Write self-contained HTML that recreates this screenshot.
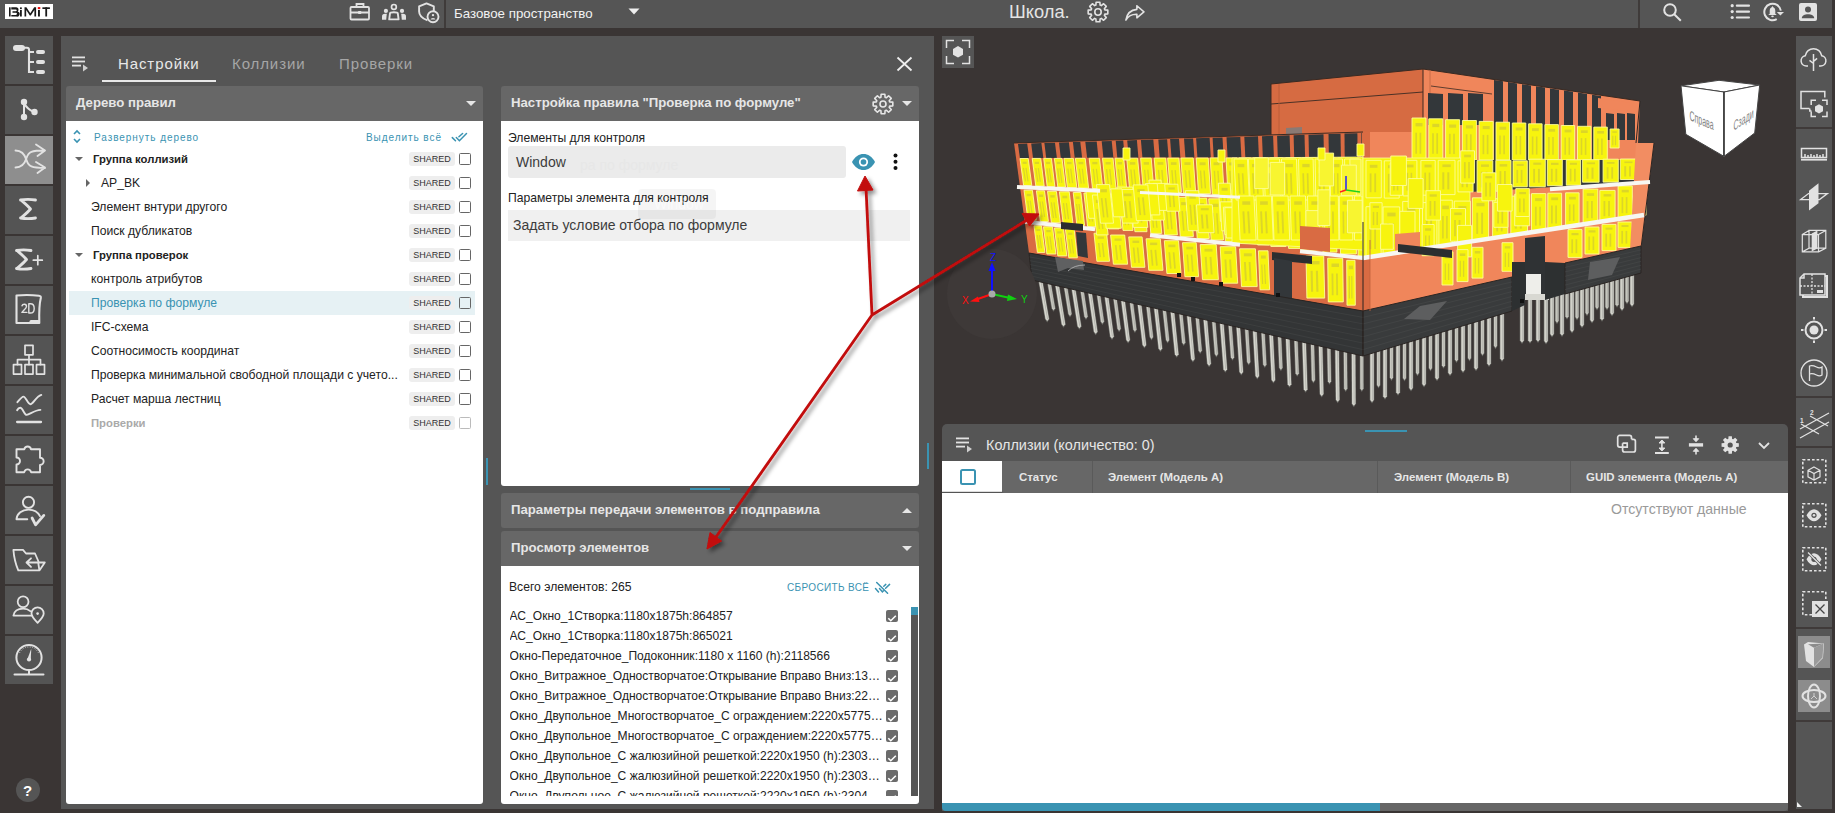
<!DOCTYPE html>
<html><head><meta charset="utf-8">
<style>
*{margin:0;padding:0;box-sizing:border-box}
html,body{width:1835px;height:813px;overflow:hidden;background:#3a3534;font-family:"Liberation Sans",sans-serif}
.a{position:absolute}
.t{position:absolute;white-space:nowrap;line-height:1}
.sb{position:absolute;left:5px;width:48px;height:48px;background:#545454}
.sb.act{background:#8e8e8e}
.sb svg,.ic svg{position:absolute;left:0;top:0;overflow:visible}
.hdr{position:absolute;background:#676767;border-radius:3px 3px 0 0}
.ttl{position:absolute;font-size:13.2px;font-weight:bold;color:#e6e6e6;white-space:nowrap;line-height:1}
.wh{position:absolute;background:#fff}
.tx{position:absolute;font-size:12.15px;color:#222;white-space:nowrap;line-height:1}
.badge{position:absolute;width:46px;height:14px;background:#eeeeee;border-radius:3px;font-size:9px;color:#333;text-align:center;line-height:14px}
.cb{position:absolute;width:12px;height:12px;border:1.5px solid #666;border-radius:1.5px}
.li{position:absolute;left:509px;font-size:12.05px;color:#222;white-space:nowrap;line-height:14px;overflow:hidden;text-overflow:ellipsis}
.lcb{position:absolute;left:886px;width:12px;height:12px;background:#6b6b6b;border-radius:2px}
.rs{position:absolute;left:1796px;width:36px;background:#555555}
</style></head><body>

<div class="a" style="left:0;top:0;width:1832px;height:28px;background:#555555"></div>
<div class="a" style="left:5px;top:4px;width:48px;height:15px;background:#fff"></div>
<svg class="a" style="left:5px;top:4px" width="48" height="15" viewBox="0 0 48 15">
<g fill="#1a1a1a">
<rect x="4" y="3.3" width="1.6" height="9.2"/>
<path d="M6.3 3.3h4.9a2.3 2.3 0 0 1 1.5 4.1a2.5 2.5 0 0 1 -1.4 5.1h-5v-1.6h4.6a1.05 1.05 0 0 0 0 -2.1h-3.4v-1.5h3.3a0.95 0.95 0 0 0 0 -1.9h-4.5z"/>
<rect x="15" y="5.9" width="1.8" height="6.6"/>
<rect x="15" y="3.4" width="1.8" height="1.6"/>
<path d="M19.5 12.5v-9.2h1.9l3.9 6l3.9 -6h1.9v9.2h-1.7v-6.4l-3.6 5.4h-1l-3.6 -5.4v6.4z"/>
<rect x="33" y="5.9" width="1.9" height="6.6"/>
<rect x="37.4" y="3.3" width="7.5" height="1.7"/>
<rect x="40.3" y="3.3" width="1.8" height="9.2"/>
</g>
<rect x="32.8" y="3.1" width="2.5" height="1.9" fill="#e00"/>
</svg>
<svg class="a" style="left:349px;top:2px" width="22" height="19" viewBox="0 0 22 19" fill="none" stroke="#e2e2e2" stroke-width="1.8">
<rect x="1.5" y="5" width="18.5" height="12.5" rx="1"/><path d="M7.5 5V2h7v3M1.5 10.5h18.5"/><rect x="9.2" y="9" width="3" height="3" fill="#e2e2e2" stroke="none"/></svg>
<svg class="a" style="left:381px;top:3px" width="26" height="18" viewBox="0 0 26 18" fill="#e2e2e2">
<circle cx="12.9" cy="3.9" r="2.4" fill="none" stroke="#e2e2e2" stroke-width="1.7"/>
<path d="M8.2 16.4L9 10.4Q9.2 9.2 12.9 9.2Q16.6 9.2 16.8 10.4L17.6 16.4z" fill="none" stroke="#e2e2e2" stroke-width="1.9" stroke-linejoin="round"/>
<circle cx="4.9" cy="7.9" r="2.1"/><path d="M1 16.8V13.5Q1 11 4 10.8H5.8L5.2 16.8z"/>
<circle cx="21" cy="7.9" r="2.1"/><path d="M25 16.8V13.5Q25 11 22 10.8H20.2L20.8 16.8z"/>
</svg>
<svg class="a" style="left:418px;top:2px" width="23" height="22" viewBox="0 0 23 22" fill="none" stroke="#e2e2e2" stroke-width="1.9">
<path d="M9.5 18.4C4.5 16.5 1.1 13.5 1.1 9.5V4.4L8.5 1.4L15.8 4.4V9.6" stroke-linejoin="round"/>
<circle cx="15" cy="14.8" r="5.5"/><circle cx="15" cy="13.1" r="1.2" fill="#e2e2e2" stroke="none"/><path d="M12.6 17.6a2.4 1.7 0 0 1 4.8 0z" fill="#e2e2e2" stroke="none"/>
</svg>
<div class="a" style="left:444px;top:0;width:2px;height:28px;background:#3f3b3a"></div>
<div class="t" style="left:454px;top:7px;font-size:13.3px;color:#f2f2f2">Базовое пространство</div>
<svg class="a" style="left:628px;top:8px" width="12" height="7"><path d="M0.5 0.5h11L6 6.5z" fill="#eee"/></svg>
<div class="t" style="left:1009px;top:3px;font-size:18.3px;color:#e4e4e4">Школа.</div>
<svg class="a" style="left:1086px;top:0" width="24" height="24"><path d="M18.88 9.86 L21.82 10.13 L21.82 13.87 L18.88 14.14 L18.37 15.35 L20.27 17.62 L17.62 20.27 L15.35 18.37 L14.14 18.88 L13.87 21.82 L10.13 21.82 L9.86 18.88 L8.65 18.37 L6.38 20.27 L3.73 17.62 L5.63 15.35 L5.12 14.14 L2.18 13.87 L2.18 10.13 L5.12 9.86 L5.63 8.65 L3.73 6.38 L6.38 3.73 L8.65 5.63 L9.86 5.12 L10.13 2.18 L13.87 2.18 L14.14 5.12 L15.35 5.63 L17.62 3.73 L20.27 6.38 L18.37 8.65Z" fill="none" stroke="#e2e2e2" stroke-width="1.6" stroke-linejoin="round"/><circle cx="12" cy="12" r="3.2" fill="none" stroke="#e2e2e2" stroke-width="1.6"/></svg>
<svg class="a" style="left:1125px;top:5px" width="20" height="16" viewBox="0 0 21 17"><path d="M12.5 0.8L20 7.2L12.5 13.6V9.8C7 9.6 3.5 11.5 0.8 16C1.8 9.5 5.5 5.2 12.5 4.6Z" fill="none" stroke="#e2e2e2" stroke-width="1.7" stroke-linejoin="round"/></svg>
<div class="a" style="left:1638px;top:0;width:2px;height:28px;background:#3f3b3a"></div>
<svg class="a" style="left:1662px;top:2px" width="20" height="20" fill="none" stroke="#e2e2e2" stroke-width="2"><circle cx="8" cy="8" r="5.8"/><path d="M12.2 12.2L18.8 18.8"/></svg>
<svg class="a" style="left:1730px;top:3px" width="21" height="17" fill="#e2e2e2"><circle cx="2.2" cy="2.7" r="1.6"/><circle cx="2.2" cy="8.6" r="1.6"/><circle cx="2.2" cy="14.5" r="1.6"/><rect x="5.8" y="1.6" width="14.2" height="2.2" rx="1"/><rect x="5.8" y="7.5" width="14.2" height="2.2" rx="1"/><rect x="5.8" y="13.4" width="14.2" height="2.2" rx="1"/></svg>
<svg class="a" style="left:1763px;top:2px" width="24" height="21" viewBox="0 0 24 21"><path d="M13.75 17.2A8.3 8.3 0 1 1 17.8 8.6" fill="none" stroke="#e2e2e2" stroke-width="2"/><path d="M13.8 10h7.2l-3.6 3.6z" fill="#e2e2e2"/><path d="M9.5 4L10.3 5.2C12 5.8 12.3 7.5 12.3 9.2V11.8L13.8 13.1H5.2L6.7 11.8V9.2C6.7 7.5 7 5.8 8.7 5.2z" fill="#e2e2e2"/><ellipse cx="9.5" cy="14.4" rx="1.3" ry="0.8" fill="#e2e2e2"/></svg>
<svg class="a" style="left:1799px;top:3px" width="18" height="18" viewBox="0 0 18 18"><rect x="0" y="0" width="18" height="18" rx="2" fill="#e2e2e2"/><circle cx="9" cy="6.4" r="3" fill="#555"/><path d="M2.8 15.2c0-2.6 3-4 6.2-4s6.2 1.4 6.2 4z" fill="#555"/></svg>
<div class="a" style="left:1832px;top:0;width:3px;height:813px;background:#3a3534"></div>
<div class="sb" style="top:36px"><svg width="48" height="48" viewBox="0 0 48 48"><rect x="8" y="8.9" width="12" height="6" rx="3" fill="#e2e2e2"/><path d="M19 11.8h3a2 2 0 0 1 2 2V36h5M24 16h5M24 26h5" fill="none" stroke="#e2e2e2" stroke-width="2.1"/><rect x="31" y="14" width="9" height="4" rx="2" fill="#e2e2e2"/><rect x="31" y="24" width="9" height="4" rx="2" fill="#e2e2e2"/><rect x="31" y="34" width="9" height="4" rx="2" fill="#e2e2e2"/></svg></div>
<div class="sb" style="top:86px"><svg width="48" height="48" viewBox="0 0 48 48"><path d="M19 16v15M19 17c2 4 5 7 10 9" fill="none" stroke="#e2e2e2" stroke-linecap="round" stroke-linejoin="round" stroke-width="2"/><circle cx="19" cy="16" r="3.2" fill="#e2e2e2"/><circle cx="19" cy="31" r="3.2" fill="#e2e2e2"/><circle cx="29.5" cy="26" r="3.2" fill="#e2e2e2"/></svg></div>
<div class="sb act" style="top:136px"><svg width="48" height="48" viewBox="0 0 48 48"><path d="M10.5 14.5c6 0 9 3 11 9.5s5 8 18.5 8M10.5 31.5c6 0 9-3 11-9.5s5-7.5 18.5-7.5M31 8.5l9 6l-7.5 5.5M31 26l9 5.5l-7.5 5.5" fill="none" stroke="#e2e2e2" stroke-linecap="round" stroke-linejoin="round" stroke-width="1.9"/></svg></div>
<div class="sb" style="top:186px"><svg width="48" height="48" viewBox="0 0 48 48"><path d="M15.5 14c5-0.8 10-0.8 15 0M16.5 14.5c3.5 3 6.5 5.5 9 8.5c-2.5 3-5.5 5.5-9 8.5M15.5 32c5 0.8 10 0.8 15 0" fill="none" stroke="#e2e2e2" stroke-linecap="round" stroke-linejoin="round" stroke-width="2.8"/></svg></div>
<div class="sb" style="top:236px"><svg width="48" height="48" viewBox="0 0 48 48"><path d="M11.5 14.5c4.5-0.8 9.5-0.8 14.5 0M12.5 15c3.5 3 6.5 5.5 9 8.5c-2.5 3-5.5 5.5-9 8.5M11.5 32.5c4.5 0.8 9.5 0.8 14.5 0" fill="none" stroke="#e2e2e2" stroke-linecap="round" stroke-linejoin="round" stroke-width="2.8"/><path d="M28.3 24.2h9M32.8 19.7v9" fill="none" stroke="#e2e2e2" stroke-linecap="round" stroke-linejoin="round" stroke-width="1.7"/></svg></div>
<div class="sb" style="top:286px"><svg width="48" height="48" viewBox="0 0 48 48"><path d="M11.5 9.5c7-0.7 15-0.7 22.5 0.2c1.5 0.2 2 1 1.8 2.2c-1.3 5-1.8 14-1.5 25.1h-22.8z" fill="none" stroke="#e2e2e2" stroke-linecap="round" stroke-linejoin="round" stroke-width="2.1"/><path d="M26 35.5h7.5" fill="none" stroke="#e2e2e2" stroke-linecap="round" stroke-linejoin="round" stroke-width="3"/><path d="M17 19.8c0.6-2 4.5-2.2 4.5 0.6c0 1.8-2.8 3.6-4.6 6h5M23.8 17.8v9.2h1.6c2.6 0 3.8-2 3.8-4.6s-1.2-4.6-3.8-4.6z" fill="none" stroke="#e2e2e2" stroke-linecap="round" stroke-linejoin="round" stroke-width="1.4"/></svg></div>
<div class="sb" style="top:336px"><svg width="48" height="48" viewBox="0 0 48 48"><rect x="20" y="9.3" width="8" height="9.5" fill="none" stroke="#e2e2e2" stroke-linecap="round" stroke-linejoin="round" stroke-width="1.7"/><rect x="8.5" y="28.6" width="8" height="9.5" fill="none" stroke="#e2e2e2" stroke-linecap="round" stroke-linejoin="round" stroke-width="1.7"/><rect x="20" y="28.6" width="8" height="9.5" fill="none" stroke="#e2e2e2" stroke-linecap="round" stroke-linejoin="round" stroke-width="1.7"/><rect x="31.5" y="28.6" width="8" height="9.5" fill="none" stroke="#e2e2e2" stroke-linecap="round" stroke-linejoin="round" stroke-width="1.7"/><path d="M24 18.8v9.8M12.5 28.6v-5h23v5" fill="none" stroke="#e2e2e2" stroke-linecap="round" stroke-linejoin="round" stroke-width="1.7"/></svg></div>
<div class="sb" style="top:386px"><svg width="48" height="48" viewBox="0 0 48 48"><path d="M12.4 16.2C15 13 17 10.6 18.6 10.6C20.5 10.6 23 18.3 25.4 18.3C28 18.3 31 10.5 36.3 8.9M12.1 24.2C13 22.5 14.5 21.8 15.3 21.8C17.5 21.8 19.5 28.9 21.5 28.9C25 28 30 24.2 35.4 23.9" fill="none" stroke="#e2e2e2" stroke-linecap="round" stroke-linejoin="round" stroke-width="1.9"/><path d="M12.1 36H36" fill="none" stroke="#e2e2e2" stroke-linecap="round" stroke-linejoin="round" stroke-width="2.3" stroke-linecap="butt"/></svg></div>
<div class="sb" style="top:436px"><svg width="48" height="48" viewBox="0 0 48 48"><path d="M11.5 13.3H19.3a3.4 3.4 0 0 1 6.7 0H35V21.7a3.6 3.6 0 0 1 0 7.3V36.2H26a3.4 3.4 0 0 0 -6.7 0H11.5V28.5a3.5 3.5 0 0 0 0 -7z" fill="none" stroke="#e2e2e2" stroke-linecap="round" stroke-linejoin="round" stroke-width="1.9"/></svg></div>
<div class="sb" style="top:486px"><svg width="48" height="48" viewBox="0 0 48 48"><circle cx="23.5" cy="16.3" r="5.6" fill="none" stroke="#e2e2e2" stroke-linecap="round" stroke-linejoin="round" stroke-width="1.9"/><path d="M22.3 33.2H11.5c0.5-5.5 5.5-9.6 12-9.6c5 0 9.5 2.5 11.5 6.6" fill="none" stroke="#e2e2e2" stroke-linecap="round" stroke-linejoin="round" stroke-width="1.9"/><path d="M27.1 32l3.5 6.8l8.2-9.4" fill="none" stroke="#e2e2e2" stroke-linecap="round" stroke-linejoin="round" stroke-width="2.8"/></svg></div>
<div class="sb" style="top:536px"><svg width="48" height="48" viewBox="0 0 48 48"><path d="M13.3 34.4C10.5 28 8.8 19 8.4 13.9H18L21 17.5H30L33.5 25.5M21.5 26.5H39.8L34.4 34.4H13.3M33.2 26.5L34.4 34.4M26 22.3L21.5 26.5L26 30.8" fill="none" stroke="#e2e2e2" stroke-linecap="round" stroke-linejoin="round" stroke-width="1.8"/></svg></div>
<div class="sb" style="top:586px"><svg width="48" height="48" viewBox="0 0 48 48"><circle cx="18.1" cy="15.8" r="5.4" fill="none" stroke="#e2e2e2" stroke-linecap="round" stroke-linejoin="round" stroke-width="1.8"/><path d="M27 29.6H8.4c0.8-4.5 4.8-7 9.7-7c3 0 5.5 1 7.2 2.6" fill="none" stroke="#e2e2e2" stroke-linecap="round" stroke-linejoin="round" stroke-width="1.8"/><path d="M32.6 36.8c-3.5-3.5-6.1-6.5-6.1-9.3a6.1 6.1 0 0 1 12.2 0c0 2.8-2.6 5.8-6.1 9.3z" fill="none" stroke="#e2e2e2" stroke-linecap="round" stroke-linejoin="round" stroke-width="1.8"/><circle cx="32.6" cy="27.6" r="1.3" fill="#e2e2e2"/></svg></div>
<div class="sb" style="top:636px"><svg width="48" height="48" viewBox="0 0 48 48"><circle cx="24" cy="21.5" r="12.6" fill="none" stroke="#e2e2e2" stroke-linecap="round" stroke-linejoin="round" stroke-width="2"/><path d="M14.5 17a10.5 10.5 0 0 1 19 0" fill="none" stroke="#e2e2e2" stroke-width="0.8" stroke-dasharray="1 1.5"/><path d="M22.3 23.5l4-11l-0.6 11.6z" fill="#e2e2e2"/><circle cx="24" cy="23.5" r="2.1" fill="#e2e2e2"/><path d="M24 34.2v3.5M9.5 38.6h29" fill="none" stroke="#e2e2e2" stroke-linecap="round" stroke-linejoin="round" stroke-width="2"/></svg></div>
<div class="a" style="left:16px;top:778px;width:24px;height:24px;border-radius:50%;background:#555"></div>
<div class="t" style="left:23px;top:783px;font-size:15px;font-weight:bold;color:#fff">?</div>
<div class="a" style="left:61px;top:36px;width:873px;height:773px;background:#555555"></div>
<svg class="a" style="left:72px;top:56px" width="18" height="16" viewBox="0 0 18 16"><rect x="0" y="0.5" width="13" height="1.8" fill="#e2e2e2"/><rect x="0" y="4.6" width="13" height="1.8" fill="#e2e2e2"/><rect x="0" y="8.7" width="9" height="1.8" fill="#e2e2e2"/><path d="M11 8.5l5 3.5l-5 3.5z" fill="#cfcfcf"/></svg>
<div class="t" style="left:118px;top:56px;font-size:15px;color:#e8e8e8;letter-spacing:0.9px">Настройки</div>
<div class="t" style="left:232px;top:56px;font-size:15px;color:#a6a6a6;letter-spacing:0.9px">Коллизии</div>
<div class="t" style="left:339px;top:56px;font-size:15px;color:#a6a6a6;letter-spacing:0.9px">Проверки</div>
<div class="a" style="left:102px;top:80px;width:114px;height:2px;background:#e8e8e8"></div>
<svg class="a" style="left:896px;top:56px" width="17" height="16"><path d="M1.5 1.5L15.5 14.5M15.5 1.5L1.5 14.5" stroke="#eee" stroke-width="1.8"/></svg>
<div class="hdr" style="left:66px;top:86px;width:417px;height:35px"></div>
<div class="ttl" style="left:76px;top:96px">Дерево правил</div>
<svg class="a" style="left:466px;top:101px" width="10" height="5"><path d="M0 0H10L5.0 5z" fill="#e6e6e6"/></svg>
<div class="wh" style="left:66px;top:121px;width:417px;height:683px;border-radius:0 0 3px 3px"></div>
<svg class="a" style="left:72px;top:129px" width="10" height="15" fill="none" stroke="#3a93b2" stroke-width="1.6"><path d="M2 5l3-3l3 3M2 10l3 3l3-3"/></svg>
<div class="t" style="left:94px;top:133px;font-size:10px;color:#3a93b2;letter-spacing:0.94px">Развернуть дерево</div>
<div class="t" style="left:366px;top:133px;font-size:10px;color:#3a93b2;letter-spacing:0.94px">Выделить всё</div>
<svg class="a" style="left:440px;top:125px" width="40" height="25" viewBox="440 125 40 25" fill="none" stroke="#3a93b2" stroke-width="1.5" stroke-linecap="round"><path d="M452.3 137.6L455.5 140.8M456.3 137.5L459.4 140.7L466.5 133.5M458.9 136.8L462.6 133.5"/></svg>
<div class="tx" style="left:93px;top:153.5px;color:#222;font-weight:bold;font-size:11.3px;">Группа коллизий</div>
<svg class="a" style="left:75px;top:157px" width="8" height="5"><path d="M0 0h8l-4 4z" fill="#666"/></svg>
<div class="badge" style="left:409px;top:152px">SHARED</div>
<div class="cb" style="left:459px;top:153px;border-color:#666"></div>
<div class="tx" style="left:101px;top:177px;color:#222;font-weight:normal;">AP_BK</div>
<svg class="a" style="left:86px;top:179px" width="5" height="8"><path d="M0 0v8l4-4z" fill="#666"/></svg>
<div class="badge" style="left:409px;top:176px">SHARED</div>
<div class="cb" style="left:459px;top:177px;border-color:#666"></div>
<div class="tx" style="left:91px;top:201px;color:#222;font-weight:normal;">Элемент внтури другого</div>
<div class="badge" style="left:409px;top:200px">SHARED</div>
<div class="cb" style="left:459px;top:201px;border-color:#666"></div>
<div class="tx" style="left:91px;top:225px;color:#222;font-weight:normal;">Поиск дубликатов</div>
<div class="badge" style="left:409px;top:224px">SHARED</div>
<div class="cb" style="left:459px;top:225px;border-color:#666"></div>
<div class="tx" style="left:93px;top:249.5px;color:#222;font-weight:bold;font-size:11.3px;">Группа проверок</div>
<svg class="a" style="left:75px;top:253px" width="8" height="5"><path d="M0 0h8l-4 4z" fill="#666"/></svg>
<div class="badge" style="left:409px;top:248px">SHARED</div>
<div class="cb" style="left:459px;top:249px;border-color:#666"></div>
<div class="tx" style="left:91px;top:273px;color:#222;font-weight:normal;">контроль атрибутов</div>
<div class="badge" style="left:409px;top:272px">SHARED</div>
<div class="cb" style="left:459px;top:273px;border-color:#666"></div>
<div class="a" style="left:69px;top:291px;width:406px;height:24px;background:#e6f1f4"></div>
<div class="tx" style="left:91px;top:297px;color:#3a93b2;font-weight:normal;">Проверка по формуле</div>
<div class="badge" style="left:409px;top:296px">SHARED</div>
<div class="cb" style="left:459px;top:297px;border-color:#666"></div>
<div class="tx" style="left:91px;top:321px;color:#222;font-weight:normal;">IFC-схема</div>
<div class="badge" style="left:409px;top:320px">SHARED</div>
<div class="cb" style="left:459px;top:321px;border-color:#666"></div>
<div class="tx" style="left:91px;top:345px;color:#222;font-weight:normal;">Соотносимость координат</div>
<div class="badge" style="left:409px;top:344px">SHARED</div>
<div class="cb" style="left:459px;top:345px;border-color:#666"></div>
<div class="tx" style="left:91px;top:369px;color:#222;font-weight:normal;">Проверка минимальной свободной площади с учето...</div>
<div class="badge" style="left:409px;top:368px">SHARED</div>
<div class="cb" style="left:459px;top:369px;border-color:#666"></div>
<div class="tx" style="left:91px;top:393px;color:#222;font-weight:normal;">Расчет марша лестниц</div>
<div class="badge" style="left:409px;top:392px">SHARED</div>
<div class="cb" style="left:459px;top:393px;border-color:#666"></div>
<div class="tx" style="left:91px;top:417.5px;color:#aaaaaa;font-weight:bold;font-size:11.3px;">Проверки</div>
<div class="badge" style="left:409px;top:416px">SHARED</div>
<div class="cb" style="left:459px;top:417px;border-color:#bbb"></div>
<div class="a" style="left:486px;top:458px;width:2px;height:27px;background:#3a93b2"></div>
<div class="hdr" style="left:501px;top:86px;width:418px;height:35px"></div>
<div class="ttl" style="left:511px;top:96px">Настройка правила "Проверка по формуле"</div>
<svg class="a" style="left:871px;top:92px" width="24" height="24"><path d="M18.68 9.92 L21.82 10.13 L21.82 13.87 L18.68 14.08 L18.20 15.26 L20.27 17.62 L17.62 20.27 L15.26 18.20 L14.08 18.68 L13.87 21.82 L10.13 21.82 L9.92 18.68 L8.74 18.20 L6.38 20.27 L3.73 17.62 L5.80 15.26 L5.32 14.08 L2.18 13.87 L2.18 10.13 L5.32 9.92 L5.80 8.74 L3.73 6.38 L6.38 3.73 L8.74 5.80 L9.92 5.32 L10.13 2.18 L13.87 2.18 L14.08 5.32 L15.26 5.80 L17.62 3.73 L20.27 6.38 L18.20 8.74Z" fill="none" stroke="#e6e6e6" stroke-width="1.6" stroke-linejoin="round"/><circle cx="12" cy="12" r="3" fill="none" stroke="#e6e6e6" stroke-width="1.6"/></svg>
<svg class="a" style="left:902px;top:101px" width="10" height="5"><path d="M0 0H10L5.0 5z" fill="#e6e6e6"/></svg>
<div class="wh" style="left:501px;top:121px;width:418px;height:365px;border-radius:0 0 3px 3px"></div>
<div class="tx" style="left:508px;top:132px;color:#222">Элементы для контроля</div>
<div class="a" style="left:508px;top:146px;width:338px;height:32px;background:#ebebeb;border-radius:3px"></div>
<div class="t" style="left:516px;top:155px;font-size:14px;color:#3c3c3c">Window</div>
<svg class="a" style="left:851px;top:153px" width="25" height="18" viewBox="0 0 25 18"><path d="M1 9C4 3.5 8 1 12.5 1S21 3.5 24 9C21 14.5 17 17 12.5 17S4 14.5 1 9z" fill="#3a93b2"/><circle cx="12.5" cy="9" r="4.6" fill="#fff"/><circle cx="12.5" cy="9" r="2.8" fill="#3a93b2"/></svg>
<svg class="a" style="left:892px;top:153px" width="8" height="18" fill="#111"><circle cx="3.5" cy="2.5" r="2"/><circle cx="3.5" cy="8.7" r="2"/><circle cx="3.5" cy="15" r="2"/></svg>
<div class="tx" style="left:508px;top:192px;color:#222">Параметры элемента для контроля</div>
<div class="a" style="left:508px;top:210px;width:402px;height:31px;background:#f0f0f0"></div>
<div class="t" style="left:513px;top:218px;font-size:14px;color:#3c3c3c">Задать условие отбора по формуле</div>
<div class="t" style="left:580px;top:158px;font-size:14px;color:#e7e7e7">ра по формуле</div>
<div class="a" style="left:638px;top:189px;width:78px;height:30px;background:rgba(0,0,0,0.04);border-radius:4px"></div>
<div class="t" style="left:654px;top:197px;font-size:14px;color:rgba(255,255,255,0.55)">Window</div>
<div class="a" style="left:690px;top:488px;width:40px;height:2px;background:#3a93b2"></div>
<div class="hdr" style="left:501px;top:493px;width:418px;height:35px;border-radius:3px"></div>
<div class="ttl" style="left:511px;top:503px">Параметры передачи элементов в подправила</div>
<svg class="a" style="left:902px;top:508px" width="10" height="5"><path d="M0 5H10L5.0 0z" fill="#e6e6e6"/></svg>
<div class="hdr" style="left:501px;top:531px;width:418px;height:35px"></div>
<div class="ttl" style="left:511px;top:541px">Просмотр элементов</div>
<svg class="a" style="left:902px;top:546px" width="10" height="5"><path d="M0 0H10L5.0 5z" fill="#e6e6e6"/></svg>
<div class="wh" style="left:501px;top:566px;width:418px;height:238px;border-radius:0 0 3px 3px"></div>
<div class="tx" style="left:509px;top:581px;color:#222">Всего элементов: 265</div>
<div class="t" style="left:787px;top:583px;font-size:10px;color:#3a93b2;letter-spacing:0.35px">СБРОСИТЬ ВСЁ</div>
<svg class="a" style="left:865px;top:575px" width="35" height="25" viewBox="865 575 35 25" fill="none" stroke="#3a93b2" stroke-width="1.5" stroke-linecap="round"><path d="M876.7 582.5L887.6 593.3M875.5 588.5L878.5 591.9M879.5 588.5L882.4 591.8L883.5 590.7M885.6 588.2L889.6 584.4M883.8 586.2L885.8 584.4"/></svg>
<div class="a" style="left:501px;top:604px;width:418px;height:192px;overflow:hidden">
<div class="li" style="left:8.6px;top:5px;width:376px">АС_Окно_1Створка:1180x1875h:864857</div>
<div class="lcb" style="left:385px;top:6px"><svg width="12" height="12"><path d="M2.3 6.2l2.5 2.5l5-5" fill="none" stroke="#fff" stroke-width="1.6"/></svg></div>
<div class="li" style="left:8.6px;top:25px;width:376px">АС_Окно_1Створка:1180x1875h:865021</div>
<div class="lcb" style="left:385px;top:26px"><svg width="12" height="12"><path d="M2.3 6.2l2.5 2.5l5-5" fill="none" stroke="#fff" stroke-width="1.6"/></svg></div>
<div class="li" style="left:8.6px;top:45px;width:376px">Окно-Передаточное_Подоконник:1180 x 1160 (h):2118566</div>
<div class="lcb" style="left:385px;top:46px"><svg width="12" height="12"><path d="M2.3 6.2l2.5 2.5l5-5" fill="none" stroke="#fff" stroke-width="1.6"/></svg></div>
<div class="li" style="left:8.6px;top:65px;width:376px">Окно_Витражное_Одностворчатое:Открывание Вправо Вниз:1300x1800</div>
<div class="lcb" style="left:385px;top:66px"><svg width="12" height="12"><path d="M2.3 6.2l2.5 2.5l5-5" fill="none" stroke="#fff" stroke-width="1.6"/></svg></div>
<div class="li" style="left:8.6px;top:85px;width:376px">Окно_Витражное_Одностворчатое:Открывание Вправо Вниз:2200x1800</div>
<div class="lcb" style="left:385px;top:86px"><svg width="12" height="12"><path d="M2.3 6.2l2.5 2.5l5-5" fill="none" stroke="#fff" stroke-width="1.6"/></svg></div>
<div class="li" style="left:8.6px;top:105px;width:376px">Окно_Двупольное_Многостворчатое_С ограждением:2220x5775:1234</div>
<div class="lcb" style="left:385px;top:106px"><svg width="12" height="12"><path d="M2.3 6.2l2.5 2.5l5-5" fill="none" stroke="#fff" stroke-width="1.6"/></svg></div>
<div class="li" style="left:8.6px;top:125px;width:376px">Окно_Двупольное_Многостворчатое_С ограждением:2220x5775:1235</div>
<div class="lcb" style="left:385px;top:126px"><svg width="12" height="12"><path d="M2.3 6.2l2.5 2.5l5-5" fill="none" stroke="#fff" stroke-width="1.6"/></svg></div>
<div class="li" style="left:8.6px;top:145px;width:376px">Окно_Двупольное_С жалюзийной решеткой:2220x1950 (h):2303100</div>
<div class="lcb" style="left:385px;top:146px"><svg width="12" height="12"><path d="M2.3 6.2l2.5 2.5l5-5" fill="none" stroke="#fff" stroke-width="1.6"/></svg></div>
<div class="li" style="left:8.6px;top:165px;width:376px">Окно_Двупольное_С жалюзийной решеткой:2220x1950 (h):2303900</div>
<div class="lcb" style="left:385px;top:166px"><svg width="12" height="12"><path d="M2.3 6.2l2.5 2.5l5-5" fill="none" stroke="#fff" stroke-width="1.6"/></svg></div>
<div class="li" style="left:8.6px;top:185px;width:376px">Окно_Двупольное_С жалюзийной решеткой:2220x1950 (h):2304000</div>
<div class="lcb" style="left:385px;top:186px"><svg width="12" height="12"><path d="M2.3 6.2l2.5 2.5l5-5" fill="none" stroke="#fff" stroke-width="1.6"/></svg></div>
</div>
<div class="a" style="left:911px;top:607px;width:7px;height:189px;background:#555"></div>
<div class="a" style="left:911px;top:607px;width:7px;height:8px;background:#3a93b2"></div>
<div class="a" style="left:927px;top:443px;width:2px;height:26px;background:#3a93b2"></div>
<div class="a" style="left:942px;top:36px;width:32px;height:32px;background:#555555"></div>
<svg class="a" style="left:942px;top:36px" width="32" height="32" fill="none" stroke="#e2e2e2" stroke-width="1.5"><path d="M4.5 12V4.5H12M20 4.5h7.5V12M27.5 20v7.5H20M12 27.5H4.5V20"/><path d="M16 10l5 2.9v5.8L16 21.6l-5-2.9v-5.8z" fill="#e2e2e2" stroke="none"/></svg>
<svg class="a" style="left:934px;top:28px" width="862" height="396" viewBox="934 28 862 396"><path d="M1046.2 277.7L1050.3 277.7L1055.6 308.2L1053.5 311.7L1051.4 308.2z" fill="#6a6a66"/><path d="M1046.8 277.7L1049.8 277.7L1055.0 308.2L1053.5 310.2L1052.0 308.2z" fill="#c8c8c0"/><path d="M1048.7 277.7L1053.9 308.2" stroke="#a8a8a2" stroke-width="0.7"/><path d="M1062.7 281.5L1066.8 281.5L1072.1 314.1L1070.0 317.6L1067.9 314.1z" fill="#6a6a66"/><path d="M1063.2 281.5L1066.2 281.5L1071.5 314.1L1070.0 316.1L1068.5 314.1z" fill="#c8c8c0"/><path d="M1065.2 281.5L1070.4 314.1" stroke="#a8a8a2" stroke-width="0.7"/><path d="M1079.2 285.3L1083.3 285.3L1088.1 316.4L1086.0 319.9L1083.9 316.4z" fill="#6a6a66"/><path d="M1079.8 285.3L1082.8 285.3L1087.5 316.4L1086.0 318.4L1084.5 316.4z" fill="#c8c8c0"/><path d="M1081.7 285.3L1086.4 316.4" stroke="#a8a8a2" stroke-width="0.7"/><path d="M1095.7 289.1L1099.8 289.1L1104.5 321.5L1102.4 325.0L1100.3 321.5z" fill="#6a6a66"/><path d="M1096.2 289.1L1099.2 289.1L1103.9 321.5L1102.4 323.5L1100.9 321.5z" fill="#c8c8c0"/><path d="M1098.2 289.1L1102.8 321.5" stroke="#a8a8a2" stroke-width="0.7"/><path d="M1112.2 292.9L1116.3 292.9L1121.2 328.7L1119.1 332.2L1117.0 328.7z" fill="#6a6a66"/><path d="M1112.8 292.9L1115.8 292.9L1120.6 328.7L1119.1 330.7L1117.6 328.7z" fill="#c8c8c0"/><path d="M1114.7 292.9L1119.5 328.7" stroke="#a8a8a2" stroke-width="0.7"/><path d="M1128.7 296.7L1132.8 296.7L1137.0 329.5L1134.9 333.0L1132.8 329.5z" fill="#6a6a66"/><path d="M1129.2 296.7L1132.2 296.7L1136.4 329.5L1134.9 331.5L1133.4 329.5z" fill="#c8c8c0"/><path d="M1131.2 296.7L1135.3 329.5" stroke="#a8a8a2" stroke-width="0.7"/><path d="M1145.2 300.5L1149.3 300.5L1153.6 336.9L1151.5 340.4L1149.4 336.9z" fill="#6a6a66"/><path d="M1145.8 300.5L1148.8 300.5L1153.0 336.9L1151.5 338.9L1150.0 336.9z" fill="#c8c8c0"/><path d="M1147.7 300.5L1151.9 336.9" stroke="#a8a8a2" stroke-width="0.7"/><path d="M1161.7 304.3L1165.8 304.3L1169.7 340.1L1167.6 343.6L1165.5 340.1z" fill="#6a6a66"/><path d="M1162.2 304.3L1165.2 304.3L1169.1 340.1L1167.6 342.1L1166.1 340.1z" fill="#c8c8c0"/><path d="M1164.2 304.3L1168.0 340.1" stroke="#a8a8a2" stroke-width="0.7"/><path d="M1178.2 308.0L1182.3 308.0L1185.8 342.6L1183.7 346.1L1181.6 342.6z" fill="#6a6a66"/><path d="M1178.8 308.0L1181.8 308.0L1185.2 342.6L1183.7 344.6L1182.2 342.6z" fill="#c8c8c0"/><path d="M1180.7 308.0L1184.1 342.6" stroke="#a8a8a2" stroke-width="0.7"/><path d="M1194.7 311.8L1198.8 311.8L1202.3 350.6L1200.2 354.1L1198.1 350.6z" fill="#6a6a66"/><path d="M1195.2 311.8L1198.2 311.8L1201.7 350.6L1200.2 352.6L1198.7 350.6z" fill="#c8c8c0"/><path d="M1197.2 311.8L1200.6 350.6" stroke="#a8a8a2" stroke-width="0.7"/><path d="M1211.2 315.6L1215.3 315.6L1218.5 354.1L1216.4 357.6L1214.3 354.1z" fill="#6a6a66"/><path d="M1211.8 315.6L1214.8 315.6L1217.9 354.1L1216.4 356.1L1214.9 354.1z" fill="#c8c8c0"/><path d="M1213.7 315.6L1216.8 354.1" stroke="#a8a8a2" stroke-width="0.7"/><path d="M1227.7 319.4L1231.8 319.4L1234.6 357.3L1232.5 360.8L1230.4 357.3z" fill="#6a6a66"/><path d="M1228.2 319.4L1231.2 319.4L1234.0 357.3L1232.5 359.3L1231.0 357.3z" fill="#c8c8c0"/><path d="M1230.2 319.4L1232.9 357.3" stroke="#a8a8a2" stroke-width="0.7"/><path d="M1244.2 323.2L1248.3 323.2L1250.8 362.0L1248.7 365.5L1246.6 362.0z" fill="#6a6a66"/><path d="M1244.8 323.2L1247.8 323.2L1250.2 362.0L1248.7 364.0L1247.2 362.0z" fill="#c8c8c0"/><path d="M1246.7 323.2L1249.1 362.0" stroke="#a8a8a2" stroke-width="0.7"/><path d="M1260.7 327.0L1264.8 327.0L1266.9 364.6L1264.8 368.1L1262.7 364.6z" fill="#6a6a66"/><path d="M1261.2 327.0L1264.2 327.0L1266.3 364.6L1264.8 366.6L1263.3 364.6z" fill="#c8c8c0"/><path d="M1263.2 327.0L1265.2 364.6" stroke="#a8a8a2" stroke-width="0.7"/><path d="M1277.2 330.8L1281.3 330.8L1283.0 367.8L1280.9 371.3L1278.8 367.8z" fill="#6a6a66"/><path d="M1277.8 330.8L1280.8 330.8L1282.4 367.8L1280.9 369.8L1279.4 367.8z" fill="#c8c8c0"/><path d="M1279.7 330.8L1281.3 367.8" stroke="#a8a8a2" stroke-width="0.7"/><path d="M1293.7 334.6L1297.8 334.6L1299.3 373.2L1297.2 376.7L1295.1 373.2z" fill="#6a6a66"/><path d="M1294.2 334.6L1297.2 334.6L1298.7 373.2L1297.2 375.2L1295.7 373.2z" fill="#c8c8c0"/><path d="M1296.2 334.6L1297.6 373.2" stroke="#a8a8a2" stroke-width="0.7"/><path d="M1310.2 338.3L1314.3 338.3L1315.5 380.0L1313.4 383.5L1311.3 380.0z" fill="#6a6a66"/><path d="M1310.8 338.3L1313.8 338.3L1314.9 380.0L1313.4 382.0L1311.9 380.0z" fill="#c8c8c0"/><path d="M1312.7 338.3L1313.8 380.0" stroke="#a8a8a2" stroke-width="0.7"/><path d="M1326.7 342.1L1330.8 342.1L1331.6 381.3L1329.5 384.8L1327.4 381.3z" fill="#6a6a66"/><path d="M1327.2 342.1L1330.2 342.1L1331.0 381.3L1329.5 383.3L1328.0 381.3z" fill="#c8c8c0"/><path d="M1329.2 342.1L1329.9 381.3" stroke="#a8a8a2" stroke-width="0.7"/><path d="M1343.2 345.9L1347.3 345.9L1347.8 388.6L1345.7 392.1L1343.6 388.6z" fill="#6a6a66"/><path d="M1343.8 345.9L1346.8 345.9L1347.2 388.6L1345.7 390.6L1344.2 388.6z" fill="#c8c8c0"/><path d="M1345.7 345.9L1346.1 388.6" stroke="#a8a8a2" stroke-width="0.7"/><path d="M1359.7 349.7L1363.8 349.7L1363.9 388.5L1361.8 392.0L1359.7 388.5z" fill="#6a6a66"/><path d="M1360.2 349.7L1363.2 349.7L1363.3 388.5L1361.8 390.5L1360.3 388.5z" fill="#c8c8c0"/><path d="M1362.2 349.7L1362.2 388.5" stroke="#a8a8a2" stroke-width="0.7"/><path d="M1037.7 277.8L1042.3 277.8L1049.5 319.1L1047.2 322.6L1044.9 319.1z" fill="#6a6a66"/><path d="M1038.3 277.8L1041.7 277.8L1048.9 319.1L1047.2 321.1L1045.5 319.1z" fill="#d6d6ce"/><path d="M1040.4 277.8L1047.6 319.1" stroke="#a8a8a2" stroke-width="0.7"/><path d="M1054.2 281.6L1058.8 281.6L1065.8 324.2L1063.5 327.7L1061.2 324.2z" fill="#6a6a66"/><path d="M1054.8 281.6L1058.2 281.6L1065.2 324.2L1063.5 326.2L1061.8 324.2z" fill="#d6d6ce"/><path d="M1056.9 281.6L1063.9 324.2" stroke="#a8a8a2" stroke-width="0.7"/><path d="M1070.7 285.4L1075.3 285.4L1081.7 326.3L1079.4 329.8L1077.1 326.3z" fill="#6a6a66"/><path d="M1071.3 285.4L1074.7 285.4L1081.1 326.3L1079.4 328.3L1077.7 326.3z" fill="#d6d6ce"/><path d="M1073.4 285.4L1079.8 326.3" stroke="#a8a8a2" stroke-width="0.7"/><path d="M1087.2 289.2L1091.8 289.2L1098.0 331.7L1095.7 335.2L1093.4 331.7z" fill="#6a6a66"/><path d="M1087.8 289.2L1091.2 289.2L1097.4 331.7L1095.7 333.7L1094.0 331.7z" fill="#d6d6ce"/><path d="M1089.9 289.2L1096.1 331.7" stroke="#a8a8a2" stroke-width="0.7"/><path d="M1103.7 293.0L1108.3 293.0L1114.3 336.4L1112.0 339.9L1109.7 336.4z" fill="#6a6a66"/><path d="M1104.3 293.0L1107.7 293.0L1113.7 336.4L1112.0 338.4L1110.3 336.4z" fill="#d6d6ce"/><path d="M1106.4 293.0L1112.4 336.4" stroke="#a8a8a2" stroke-width="0.7"/><path d="M1120.2 296.8L1124.8 296.8L1130.4 340.0L1128.1 343.5L1125.8 340.0z" fill="#6a6a66"/><path d="M1120.8 296.8L1124.2 296.8L1129.8 340.0L1128.1 342.0L1126.4 340.0z" fill="#d6d6ce"/><path d="M1122.9 296.8L1128.5 340.0" stroke="#a8a8a2" stroke-width="0.7"/><path d="M1136.7 300.6L1141.3 300.6L1146.7 345.1L1144.4 348.6L1142.1 345.1z" fill="#6a6a66"/><path d="M1137.3 300.6L1140.7 300.6L1146.1 345.1L1144.4 347.1L1142.7 345.1z" fill="#d6d6ce"/><path d="M1139.4 300.6L1144.8 345.1" stroke="#a8a8a2" stroke-width="0.7"/><path d="M1153.2 304.4L1157.8 304.4L1162.7 348.4L1160.4 351.9L1158.1 348.4z" fill="#6a6a66"/><path d="M1153.8 304.4L1157.2 304.4L1162.1 348.4L1160.4 350.4L1158.7 348.4z" fill="#d6d6ce"/><path d="M1155.9 304.4L1160.8 348.4" stroke="#a8a8a2" stroke-width="0.7"/><path d="M1169.7 308.1L1174.3 308.1L1179.0 354.3L1176.7 357.8L1174.4 354.3z" fill="#6a6a66"/><path d="M1170.3 308.1L1173.7 308.1L1178.4 354.3L1176.7 356.3L1175.0 354.3z" fill="#d6d6ce"/><path d="M1172.4 308.1L1177.1 354.3" stroke="#a8a8a2" stroke-width="0.7"/><path d="M1186.2 311.9L1190.8 311.9L1195.2 359.0L1192.9 362.5L1190.6 359.0z" fill="#6a6a66"/><path d="M1186.8 311.9L1190.2 311.9L1194.6 359.0L1192.9 361.0L1191.2 359.0z" fill="#d6d6ce"/><path d="M1188.9 311.9L1193.3 359.0" stroke="#a8a8a2" stroke-width="0.7"/><path d="M1202.7 315.7L1207.3 315.7L1211.4 363.7L1209.1 367.2L1206.8 363.7z" fill="#6a6a66"/><path d="M1203.3 315.7L1206.7 315.7L1210.8 363.7L1209.1 365.7L1207.4 363.7z" fill="#d6d6ce"/><path d="M1205.4 315.7L1209.5 363.7" stroke="#a8a8a2" stroke-width="0.7"/><path d="M1219.2 319.5L1223.8 319.5L1227.6 369.3L1225.3 372.8L1223.0 369.3z" fill="#6a6a66"/><path d="M1219.8 319.5L1223.2 319.5L1227.0 369.3L1225.3 371.3L1223.6 369.3z" fill="#d6d6ce"/><path d="M1221.9 319.5L1225.7 369.3" stroke="#a8a8a2" stroke-width="0.7"/><path d="M1235.7 323.3L1240.3 323.3L1243.6 372.0L1241.3 375.5L1239.0 372.0z" fill="#6a6a66"/><path d="M1236.3 323.3L1239.7 323.3L1243.0 372.0L1241.3 374.0L1239.6 372.0z" fill="#d6d6ce"/><path d="M1238.4 323.3L1241.7 372.0" stroke="#a8a8a2" stroke-width="0.7"/><path d="M1252.2 327.1L1256.8 327.1L1259.6 375.9L1257.3 379.4L1255.0 375.9z" fill="#6a6a66"/><path d="M1252.8 327.1L1256.2 327.1L1259.0 375.9L1257.3 377.9L1255.6 375.9z" fill="#d6d6ce"/><path d="M1254.9 327.1L1257.7 375.9" stroke="#a8a8a2" stroke-width="0.7"/><path d="M1268.7 330.9L1273.3 330.9L1275.7 380.0L1273.4 383.5L1271.1 380.0z" fill="#6a6a66"/><path d="M1269.3 330.9L1272.7 330.9L1275.1 380.0L1273.4 382.0L1271.7 380.0z" fill="#d6d6ce"/><path d="M1271.4 330.9L1273.8 380.0" stroke="#a8a8a2" stroke-width="0.7"/><path d="M1285.2 334.7L1289.8 334.7L1291.8 384.3L1289.5 387.8L1287.2 384.3z" fill="#6a6a66"/><path d="M1285.8 334.7L1289.2 334.7L1291.2 384.3L1289.5 386.3L1287.8 384.3z" fill="#d6d6ce"/><path d="M1287.9 334.7L1289.9 384.3" stroke="#a8a8a2" stroke-width="0.7"/><path d="M1301.7 338.5L1306.3 338.5L1307.9 389.3L1305.6 392.8L1303.3 389.3z" fill="#6a6a66"/><path d="M1302.3 338.5L1305.7 338.5L1307.3 389.3L1305.6 391.3L1303.9 389.3z" fill="#d6d6ce"/><path d="M1304.4 338.5L1306.0 389.3" stroke="#a8a8a2" stroke-width="0.7"/><path d="M1318.2 342.2L1322.8 342.2L1324.0 394.0L1321.7 397.5L1319.4 394.0z" fill="#6a6a66"/><path d="M1318.8 342.2L1322.2 342.2L1323.4 394.0L1321.7 396.0L1320.0 394.0z" fill="#d6d6ce"/><path d="M1320.9 342.2L1322.1 394.0" stroke="#a8a8a2" stroke-width="0.7"/><path d="M1334.7 346.0L1339.3 346.0L1340.0 399.8L1337.7 403.3L1335.4 399.8z" fill="#6a6a66"/><path d="M1335.3 346.0L1338.7 346.0L1339.4 399.8L1337.7 401.8L1336.0 399.8z" fill="#d6d6ce"/><path d="M1337.4 346.0L1338.1 399.8" stroke="#a8a8a2" stroke-width="0.7"/><path d="M1351.2 349.8L1355.8 349.8L1356.1 403.8L1353.8 407.3L1351.5 403.8z" fill="#6a6a66"/><path d="M1351.8 349.8L1355.2 349.8L1355.5 403.8L1353.8 405.8L1352.1 403.8z" fill="#d6d6ce"/><path d="M1353.9 349.8L1354.2 403.8" stroke="#a8a8a2" stroke-width="0.7"/><path d="M1376.4 345.3L1380.6 345.3L1380.6 385.0L1378.5 388.5L1376.4 385.0z" fill="#6a6a66"/><path d="M1377.0 345.3L1380.0 345.3L1380.0 385.0L1378.5 387.0L1377.0 385.0z" fill="#c8c8c0"/><path d="M1378.9 345.3L1378.9 385.0" stroke="#a8a8a2" stroke-width="0.7"/><path d="M1389.4 341.4L1393.6 341.4L1393.6 377.4L1391.5 380.9L1389.4 377.4z" fill="#6a6a66"/><path d="M1390.0 341.4L1393.0 341.4L1393.0 377.4L1391.5 379.4L1390.0 377.4z" fill="#c8c8c0"/><path d="M1391.9 341.4L1391.9 377.4" stroke="#a8a8a2" stroke-width="0.7"/><path d="M1402.4 337.5L1406.6 337.5L1406.6 378.1L1404.5 381.6L1402.4 378.1z" fill="#6a6a66"/><path d="M1403.0 337.5L1406.0 337.5L1406.0 378.1L1404.5 380.1L1403.0 378.1z" fill="#c8c8c0"/><path d="M1404.9 337.5L1404.9 378.1" stroke="#a8a8a2" stroke-width="0.7"/><path d="M1415.4 333.5L1419.6 333.5L1419.6 372.7L1417.5 376.2L1415.4 372.7z" fill="#6a6a66"/><path d="M1416.0 333.5L1419.0 333.5L1419.0 372.7L1417.5 374.7L1416.0 372.7z" fill="#c8c8c0"/><path d="M1417.9 333.5L1417.9 372.7" stroke="#a8a8a2" stroke-width="0.7"/><path d="M1428.4 329.6L1432.6 329.6L1432.6 368.1L1430.5 371.6L1428.4 368.1z" fill="#6a6a66"/><path d="M1429.0 329.6L1432.0 329.6L1432.0 368.1L1430.5 370.1L1429.0 368.1z" fill="#c8c8c0"/><path d="M1430.9 329.6L1430.9 368.1" stroke="#a8a8a2" stroke-width="0.7"/><path d="M1441.4 325.7L1445.6 325.7L1445.6 365.3L1443.5 368.8L1441.4 365.3z" fill="#6a6a66"/><path d="M1442.0 325.7L1445.0 325.7L1445.0 365.3L1443.5 367.3L1442.0 365.3z" fill="#c8c8c0"/><path d="M1443.9 325.7L1443.9 365.3" stroke="#a8a8a2" stroke-width="0.7"/><path d="M1454.4 321.8L1458.6 321.8L1458.6 359.5L1456.5 363.0L1454.4 359.5z" fill="#6a6a66"/><path d="M1455.0 321.8L1458.0 321.8L1458.0 359.5L1456.5 361.5L1455.0 359.5z" fill="#c8c8c0"/><path d="M1456.9 321.8L1456.9 359.5" stroke="#a8a8a2" stroke-width="0.7"/><path d="M1467.4 317.8L1471.6 317.8L1471.6 358.1L1469.5 361.6L1467.4 358.1z" fill="#6a6a66"/><path d="M1468.0 317.8L1471.0 317.8L1471.0 358.1L1469.5 360.1L1468.0 358.1z" fill="#c8c8c0"/><path d="M1469.9 317.8L1469.9 358.1" stroke="#a8a8a2" stroke-width="0.7"/><path d="M1480.4 313.9L1484.6 313.9L1484.6 352.9L1482.5 356.4L1480.4 352.9z" fill="#6a6a66"/><path d="M1481.0 313.9L1484.0 313.9L1484.0 352.9L1482.5 354.9L1481.0 352.9z" fill="#c8c8c0"/><path d="M1482.9 313.9L1482.9 352.9" stroke="#a8a8a2" stroke-width="0.7"/><path d="M1493.4 310.0L1497.6 310.0L1497.6 345.8L1495.5 349.3L1493.4 345.8z" fill="#6a6a66"/><path d="M1494.0 310.0L1497.0 310.0L1497.0 345.8L1495.5 347.8L1494.0 345.8z" fill="#c8c8c0"/><path d="M1495.9 310.0L1495.9 345.8" stroke="#a8a8a2" stroke-width="0.7"/><path d="M1369.7 349.3L1374.3 349.3L1374.3 400.1L1372.0 403.6L1369.7 400.1z" fill="#6a6a66"/><path d="M1370.3 349.3L1373.7 349.3L1373.7 400.1L1372.0 402.1L1370.3 400.1z" fill="#d6d6ce"/><path d="M1372.4 349.3L1372.4 400.1" stroke="#a8a8a2" stroke-width="0.7"/><path d="M1382.7 345.4L1387.3 345.4L1387.3 396.2L1385.0 399.7L1382.7 396.2z" fill="#6a6a66"/><path d="M1383.3 345.4L1386.7 345.4L1386.7 396.2L1385.0 398.2L1383.3 396.2z" fill="#d6d6ce"/><path d="M1385.4 345.4L1385.4 396.2" stroke="#a8a8a2" stroke-width="0.7"/><path d="M1395.7 341.4L1400.3 341.4L1400.3 392.3L1398.0 395.8L1395.7 392.3z" fill="#6a6a66"/><path d="M1396.3 341.4L1399.7 341.4L1399.7 392.3L1398.0 394.3L1396.3 392.3z" fill="#d6d6ce"/><path d="M1398.4 341.4L1398.4 392.3" stroke="#a8a8a2" stroke-width="0.7"/><path d="M1408.7 337.5L1413.3 337.5L1413.3 388.1L1411.0 391.6L1408.7 388.1z" fill="#6a6a66"/><path d="M1409.3 337.5L1412.7 337.5L1412.7 388.1L1411.0 390.1L1409.3 388.1z" fill="#d6d6ce"/><path d="M1411.4 337.5L1411.4 388.1" stroke="#a8a8a2" stroke-width="0.7"/><path d="M1421.7 333.6L1426.3 333.6L1426.3 384.1L1424.0 387.6L1421.7 384.1z" fill="#6a6a66"/><path d="M1422.3 333.6L1425.7 333.6L1425.7 384.1L1424.0 386.1L1422.3 384.1z" fill="#d6d6ce"/><path d="M1424.4 333.6L1424.4 384.1" stroke="#a8a8a2" stroke-width="0.7"/><path d="M1434.7 329.7L1439.3 329.7L1439.3 377.8L1437.0 381.3L1434.7 377.8z" fill="#6a6a66"/><path d="M1435.3 329.7L1438.7 329.7L1438.7 377.8L1437.0 379.8L1435.3 377.8z" fill="#d6d6ce"/><path d="M1437.4 329.7L1437.4 377.8" stroke="#a8a8a2" stroke-width="0.7"/><path d="M1447.7 325.7L1452.3 325.7L1452.3 372.8L1450.0 376.3L1447.7 372.8z" fill="#6a6a66"/><path d="M1448.3 325.7L1451.7 325.7L1451.7 372.8L1450.0 374.8L1448.3 372.8z" fill="#d6d6ce"/><path d="M1450.4 325.7L1450.4 372.8" stroke="#a8a8a2" stroke-width="0.7"/><path d="M1460.7 321.8L1465.3 321.8L1465.3 369.7L1463.0 373.2L1460.7 369.7z" fill="#6a6a66"/><path d="M1461.3 321.8L1464.7 321.8L1464.7 369.7L1463.0 371.7L1461.3 369.7z" fill="#d6d6ce"/><path d="M1463.4 321.8L1463.4 369.7" stroke="#a8a8a2" stroke-width="0.7"/><path d="M1473.7 317.9L1478.3 317.9L1478.3 367.8L1476.0 371.3L1473.7 367.8z" fill="#6a6a66"/><path d="M1474.3 317.9L1477.7 317.9L1477.7 367.8L1476.0 369.8L1474.3 367.8z" fill="#d6d6ce"/><path d="M1476.4 317.9L1476.4 367.8" stroke="#a8a8a2" stroke-width="0.7"/><path d="M1486.7 313.9L1491.3 313.9L1491.3 363.4L1489.0 366.9L1486.7 363.4z" fill="#6a6a66"/><path d="M1487.3 313.9L1490.7 313.9L1490.7 363.4L1489.0 365.4L1487.3 363.4z" fill="#d6d6ce"/><path d="M1489.4 313.9L1489.4 363.4" stroke="#a8a8a2" stroke-width="0.7"/><path d="M1499.7 310.0L1504.3 310.0L1504.3 358.4L1502.0 361.9L1499.7 358.4z" fill="#6a6a66"/><path d="M1500.3 310.0L1503.7 310.0L1503.7 358.4L1502.0 360.4L1500.3 358.4z" fill="#d6d6ce"/><path d="M1502.4 310.0L1502.4 358.4" stroke="#a8a8a2" stroke-width="0.7"/><path d="M1554.9 290.2L1559.1 290.2L1559.1 320.7L1557.0 324.2L1554.9 320.7z" fill="#6a6a66"/><path d="M1555.5 290.2L1558.5 290.2L1558.5 320.7L1557.0 322.7L1555.5 320.7z" fill="#c8c8c0"/><path d="M1557.4 290.2L1557.4 320.7" stroke="#a8a8a2" stroke-width="0.7"/><path d="M1564.9 287.4L1569.1 287.4L1569.1 316.2L1567.0 319.7L1564.9 316.2z" fill="#6a6a66"/><path d="M1565.5 287.4L1568.5 287.4L1568.5 316.2L1567.0 318.2L1565.5 316.2z" fill="#c8c8c0"/><path d="M1567.4 287.4L1567.4 316.2" stroke="#a8a8a2" stroke-width="0.7"/><path d="M1574.9 284.7L1579.1 284.7L1579.1 316.9L1577.0 320.4L1574.9 316.9z" fill="#6a6a66"/><path d="M1575.5 284.7L1578.5 284.7L1578.5 316.9L1577.0 318.9L1575.5 316.9z" fill="#c8c8c0"/><path d="M1577.4 284.7L1577.4 316.9" stroke="#a8a8a2" stroke-width="0.7"/><path d="M1584.9 281.9L1589.1 281.9L1589.1 312.7L1587.0 316.2L1584.9 312.7z" fill="#6a6a66"/><path d="M1585.5 281.9L1588.5 281.9L1588.5 312.7L1587.0 314.7L1585.5 312.7z" fill="#c8c8c0"/><path d="M1587.4 281.9L1587.4 312.7" stroke="#a8a8a2" stroke-width="0.7"/><path d="M1594.9 279.2L1599.1 279.2L1599.1 307.0L1597.0 310.5L1594.9 307.0z" fill="#6a6a66"/><path d="M1595.5 279.2L1598.5 279.2L1598.5 307.0L1597.0 309.0L1595.5 307.0z" fill="#c8c8c0"/><path d="M1597.4 279.2L1597.4 307.0" stroke="#a8a8a2" stroke-width="0.7"/><path d="M1604.9 276.4L1609.1 276.4L1609.1 307.1L1607.0 310.6L1604.9 307.1z" fill="#6a6a66"/><path d="M1605.5 276.4L1608.5 276.4L1608.5 307.1L1607.0 309.1L1605.5 307.1z" fill="#c8c8c0"/><path d="M1607.4 276.4L1607.4 307.1" stroke="#a8a8a2" stroke-width="0.7"/><path d="M1614.9 273.6L1619.1 273.6L1619.1 304.2L1617.0 307.7L1614.9 304.2z" fill="#6a6a66"/><path d="M1615.5 273.6L1618.5 273.6L1618.5 304.2L1617.0 306.2L1615.5 304.2z" fill="#c8c8c0"/><path d="M1617.4 273.6L1617.4 304.2" stroke="#a8a8a2" stroke-width="0.7"/><path d="M1624.9 270.9L1629.1 270.9L1629.1 301.1L1627.0 304.6L1624.9 301.1z" fill="#6a6a66"/><path d="M1625.5 270.9L1628.5 270.9L1628.5 301.1L1627.0 303.1L1625.5 301.1z" fill="#c8c8c0"/><path d="M1627.4 270.9L1627.4 301.1" stroke="#a8a8a2" stroke-width="0.7"/><path d="M1549.7 293.6L1554.3 293.6L1554.3 334.1L1552.0 337.6L1549.7 334.1z" fill="#6a6a66"/><path d="M1550.3 293.6L1553.7 293.6L1553.7 334.1L1552.0 336.1L1550.3 334.1z" fill="#d6d6ce"/><path d="M1552.4 293.6L1552.4 334.1" stroke="#a8a8a2" stroke-width="0.7"/><path d="M1559.7 290.8L1564.3 290.8L1564.3 333.6L1562.0 337.1L1559.7 333.6z" fill="#6a6a66"/><path d="M1560.3 290.8L1563.7 290.8L1563.7 333.6L1562.0 335.6L1560.3 333.6z" fill="#d6d6ce"/><path d="M1562.4 290.8L1562.4 333.6" stroke="#a8a8a2" stroke-width="0.7"/><path d="M1569.7 288.1L1574.3 288.1L1574.3 329.9L1572.0 333.4L1569.7 329.9z" fill="#6a6a66"/><path d="M1570.3 288.1L1573.7 288.1L1573.7 329.9L1572.0 331.9L1570.3 329.9z" fill="#d6d6ce"/><path d="M1572.4 288.1L1572.4 329.9" stroke="#a8a8a2" stroke-width="0.7"/><path d="M1579.7 285.3L1584.3 285.3L1584.3 324.7L1582.0 328.2L1579.7 324.7z" fill="#6a6a66"/><path d="M1580.3 285.3L1583.7 285.3L1583.7 324.7L1582.0 326.7L1580.3 324.7z" fill="#d6d6ce"/><path d="M1582.4 285.3L1582.4 324.7" stroke="#a8a8a2" stroke-width="0.7"/><path d="M1589.7 282.5L1594.3 282.5L1594.3 320.0L1592.0 323.5L1589.7 320.0z" fill="#6a6a66"/><path d="M1590.3 282.5L1593.7 282.5L1593.7 320.0L1592.0 322.0L1590.3 320.0z" fill="#d6d6ce"/><path d="M1592.4 282.5L1592.4 320.0" stroke="#a8a8a2" stroke-width="0.7"/><path d="M1599.7 279.8L1604.3 279.8L1604.3 318.2L1602.0 321.7L1599.7 318.2z" fill="#6a6a66"/><path d="M1600.3 279.8L1603.7 279.8L1603.7 318.2L1602.0 320.2L1600.3 318.2z" fill="#d6d6ce"/><path d="M1602.4 279.8L1602.4 318.2" stroke="#a8a8a2" stroke-width="0.7"/><path d="M1609.7 277.0L1614.3 277.0L1614.3 313.1L1612.0 316.6L1609.7 313.1z" fill="#6a6a66"/><path d="M1610.3 277.0L1613.7 277.0L1613.7 313.1L1612.0 315.1L1610.3 313.1z" fill="#d6d6ce"/><path d="M1612.4 277.0L1612.4 313.1" stroke="#a8a8a2" stroke-width="0.7"/><path d="M1619.7 274.2L1624.3 274.2L1624.3 308.0L1622.0 311.5L1619.7 308.0z" fill="#6a6a66"/><path d="M1620.3 274.2L1623.7 274.2L1623.7 308.0L1622.0 310.0L1620.3 308.0z" fill="#d6d6ce"/><path d="M1622.4 274.2L1622.4 308.0" stroke="#a8a8a2" stroke-width="0.7"/><path d="M1629.7 271.5L1634.3 271.5L1634.3 303.9L1632.0 307.4L1629.7 303.9z" fill="#6a6a66"/><path d="M1630.3 271.5L1633.7 271.5L1633.7 303.9L1632.0 305.9L1630.3 303.9z" fill="#d6d6ce"/><path d="M1632.4 271.5L1632.4 303.9" stroke="#a8a8a2" stroke-width="0.7"/><path d="M1519.7 298.0L1524.3 298.0L1524.3 340.4L1522.0 343.9L1519.7 340.4z" fill="#6a6a66"/><path d="M1520.3 298.0L1523.7 298.0L1523.7 340.4L1522.0 342.4L1520.3 340.4z" fill="#d6d6ce"/><path d="M1522.4 298.0L1522.4 340.4" stroke="#a8a8a2" stroke-width="0.7"/><path d="M1527.7 298.0L1532.3 298.0L1532.3 340.3L1530.0 343.8L1527.7 340.3z" fill="#6a6a66"/><path d="M1528.3 298.0L1531.7 298.0L1531.7 340.3L1530.0 342.3L1528.3 340.3z" fill="#d6d6ce"/><path d="M1530.4 298.0L1530.4 340.3" stroke="#a8a8a2" stroke-width="0.7"/><path d="M1535.7 298.0L1540.3 298.0L1540.3 339.6L1538.0 343.1L1535.7 339.6z" fill="#6a6a66"/><path d="M1536.3 298.0L1539.7 298.0L1539.7 339.6L1538.0 341.6L1536.3 339.6z" fill="#d6d6ce"/><path d="M1538.4 298.0L1538.4 339.6" stroke="#a8a8a2" stroke-width="0.7"/><path d="M1543.7 298.0L1548.3 298.0L1548.3 341.0L1546.0 344.5L1543.7 341.0z" fill="#6a6a66"/><path d="M1544.3 298.0L1547.7 298.0L1547.7 341.0L1546.0 343.0L1544.3 341.0z" fill="#d6d6ce"/><path d="M1546.4 298.0L1546.4 341.0" stroke="#a8a8a2" stroke-width="0.7"/><path d="M1271.0 84.0 L1423.0 69.0 L1423.0 140.0 L1271.0 140.0Z" fill="#d66b42" /><path d="M1271.0 104.0L1423.0 92.0" stroke="#3a2a22" stroke-width="0.9"/><path d="M1271.0 84.0L1423.0 69.0" stroke="#3a2a22" stroke-width="1"/><path d="M1271.0 84.0L1271.0 140.0" stroke="#3a2a22" stroke-width="1"/><path d="M1279.0 84.0L1279.0 140.0" stroke="#b85c38" stroke-width="0.8"/><path d="M1423.0 69.0 L1640.0 101.0 L1638.0 143.0 L1654.0 143.0 L1641.0 248.0 L1363.0 330.0 L1363.0 132.0 L1423.0 132.0Z" fill="#f0865b" /><path d="M1423.0 69.0L1640.0 101.0" stroke="#3a2a22" stroke-width="1"/><path d="M1423.0 69.0L1423.0 135.0" stroke="#3a2a22" stroke-width="1"/><path d="M1430.0 70.0L1430.0 135.0" stroke="#c46a44" stroke-width="0.9"/><path d="M1431.0 86.0L1492.0 94.0" stroke="#3a2a22" stroke-width="0.8"/><path d="M1428.0 93.0 L1443.0 94.0 L1443.0 125.0 L1428.0 125.0Z" fill="#33373a" /><path d="M1448.0 93.0 L1463.0 94.0 L1463.0 125.0 L1448.0 125.0Z" fill="#33373a" /><path d="M1468.0 93.0 L1483.0 94.0 L1483.0 125.0 L1468.0 125.0Z" fill="#33373a" /><path d="M1494.0 80.0 L1503.0 81.3 L1503.0 165.0 L1494.0 165.0Z" fill="#33373a" /><path d="M1508.0 82.1 L1517.0 83.4 L1517.0 165.0 L1508.0 165.0Z" fill="#33373a" /><path d="M1522.0 84.2 L1531.0 85.5 L1531.0 165.0 L1522.0 165.0Z" fill="#33373a" /><path d="M1536.0 86.3 L1545.0 87.6 L1545.0 165.0 L1536.0 165.0Z" fill="#33373a" /><path d="M1550.0 88.4 L1559.0 89.7 L1559.0 165.0 L1550.0 165.0Z" fill="#33373a" /><path d="M1564.0 90.5 L1573.0 91.8 L1573.0 165.0 L1564.0 165.0Z" fill="#33373a" /><path d="M1578.0 92.6 L1587.0 93.9 L1587.0 165.0 L1578.0 165.0Z" fill="#33373a" /><path d="M1592.0 94.7 L1601.0 96.0 L1601.0 165.0 L1592.0 165.0Z" fill="#33373a" /><path d="M1598.0 98.0 L1638.0 104.0 L1638.0 112.0 L1598.0 108.0Z" fill="#f0865b" /><path d="M1606.0 113.0 L1614.0 114.0 L1614.0 140.0 L1606.0 140.0Z" fill="#33373a" /><path d="M1617.0 113.0 L1625.0 114.0 L1625.0 140.0 L1617.0 140.0Z" fill="#33373a" /><path d="M1627.0 113.0 L1635.0 114.0 L1635.0 140.0 L1627.0 140.0Z" fill="#33373a" /><path d="M1286.0 128.0 L1302.0 127.0 L1302.0 134.0 L1286.0 135.0Z" fill="#8a7a74" /><path d="M1014.0 143.0 L1363.0 132.0 L1370.0 132.0 L1370.0 311.0 L1363.0 311.0 L1029.0 253.0Z" fill="#d96b43" /><path d="M1014.0 143.0L1363.0 132.0" stroke="#3a2a22" stroke-width="1"/><path d="M1018.0 143.9 L1027.2 143.6 L1029.1 158.0 L1019.9 158.0Z" fill="#33373a" /><path d="M1031.2 143.5 L1041.4 143.1 L1043.3 158.0 L1033.0 158.0Z" fill="#33373a" /><path d="M1044.4 143.0 L1055.0 142.7 L1056.9 157.9 L1046.2 157.9Z" fill="#33373a" /><path d="M1059.0 142.6 L1068.9 142.3 L1070.7 157.9 L1060.8 157.9Z" fill="#33373a" /><path d="M1072.9 142.1 L1080.3 141.9 L1082.1 157.8 L1074.7 157.8Z" fill="#33373a" /><path d="M1085.3 141.8 L1096.7 141.4 L1098.4 157.8 L1087.1 157.8Z" fill="#33373a" /><path d="M1101.7 141.2 L1111.7 140.9 L1113.4 157.7 L1103.4 157.7Z" fill="#33373a" /><path d="M1115.7 140.8 L1123.2 140.6 L1124.8 157.7 L1117.3 157.7Z" fill="#33373a" /><path d="M1127.2 140.4 L1136.9 140.1 L1138.4 157.7 L1128.8 157.7Z" fill="#33373a" /><path d="M1140.9 140.0 L1153.3 139.6 L1154.8 157.6 L1142.4 157.6Z" fill="#33373a" /><path d="M1158.3 139.5 L1167.1 139.2 L1168.6 157.6 L1159.7 157.6Z" fill="#33373a" /><path d="M1170.1 139.1 L1179.0 138.8 L1180.4 157.6 L1171.5 157.6Z" fill="#33373a" /><path d="M1184.0 138.6 L1193.1 138.4 L1194.4 157.5 L1185.4 157.5Z" fill="#33373a" /><path d="M1196.1 138.3 L1209.6 137.8 L1210.8 157.5 L1197.4 157.5Z" fill="#33373a" /><path d="M1212.6 137.7 L1222.5 137.4 L1223.6 157.4 L1213.7 157.4Z" fill="#33373a" /><path d="M1226.5 137.3 L1240.3 136.9 L1241.4 157.4 L1227.6 157.4Z" fill="#33373a" /><path d="M1244.3 136.7 L1258.0 136.3 L1258.9 157.3 L1245.3 157.3Z" fill="#33373a" /><path d="M1262.0 136.2 L1273.1 135.8 L1273.9 157.3 L1262.8 157.3Z" fill="#33373a" /><path d="M1277.1 135.7 L1289.6 135.3 L1290.3 157.2 L1277.8 157.2Z" fill="#33373a" /><path d="M1293.6 135.2 L1304.5 134.8 L1305.1 157.2 L1294.2 157.2Z" fill="#33373a" /><path d="M1308.5 134.7 L1323.5 134.2 L1324.0 157.2 L1309.0 157.2Z" fill="#33373a" /><path d="M1328.5 134.1 L1340.5 133.7 L1340.9 157.1 L1328.9 157.1Z" fill="#33373a" /><path d="M1344.5 133.6 L1357.4 133.2 L1357.5 157.1 L1344.7 157.1Z" fill="#33373a" /><path d="M1361.4 133.1 L1362.0 133.0 L1362.0 157.0 L1361.4 157.0Z" fill="#33373a" /><path d="M1020.0 158.5 L1028.2 158.5 L1031.8 185.5 L1023.6 185.5Z" fill="#f7f40e" stroke="#fdfd9a" stroke-width="0.9"/><path d="M1023.5 167.9L1025.5 181.4" stroke="#dcd628" stroke-width="1.2"/><path d="M1026.0 167.9L1028.0 181.4" stroke="#dcd628" stroke-width="1.2"/><rect x="1022.6" y="161.7" width="4.1" height="2.2" fill="#dcd628"/><path d="M1032.2 158.4 L1040.7 158.4 L1044.2 186.1 L1035.8 186.1Z" fill="#f7f40e" stroke="#fdfd9a" stroke-width="0.9"/><path d="M1035.8 168.1L1037.8 181.9" stroke="#dcd628" stroke-width="1.2"/><path d="M1038.3 168.1L1040.3 181.9" stroke="#dcd628" stroke-width="1.2"/><rect x="1034.8" y="161.8" width="4.2" height="2.2" fill="#dcd628"/><path d="M1043.7 158.4 L1051.4 158.4 L1054.9 186.6 L1047.2 186.6Z" fill="#f7f40e" stroke="#fdfd9a" stroke-width="0.9"/><path d="M1047.0 168.3L1049.0 182.4" stroke="#dcd628" stroke-width="1.2"/><path d="M1049.3 168.3L1051.3 182.4" stroke="#dcd628" stroke-width="1.2"/><rect x="1046.1" y="161.8" width="3.9" height="2.3" fill="#dcd628"/><path d="M1054.4 158.4 L1062.0 158.4 L1065.5 187.1 L1057.8 187.1Z" fill="#f7f40e" stroke="#fdfd9a" stroke-width="0.9"/><path d="M1057.7 168.4L1059.6 182.8" stroke="#dcd628" stroke-width="1.2"/><path d="M1060.0 168.4L1061.9 182.8" stroke="#dcd628" stroke-width="1.2"/><rect x="1056.8" y="161.8" width="3.8" height="2.3" fill="#dcd628"/><path d="M1064.0 158.4 L1073.4 158.4 L1076.8 187.6 L1067.4 187.6Z" fill="#f7f40e" stroke="#fdfd9a" stroke-width="0.9"/><path d="M1067.9 168.6L1069.7 183.2" stroke="#dcd628" stroke-width="1.2"/><path d="M1070.7 168.6L1072.6 183.2" stroke="#dcd628" stroke-width="1.2"/><rect x="1066.9" y="161.9" width="4.7" height="2.3" fill="#dcd628"/><path d="M1075.4 158.3 L1085.2 158.3 L1088.6 188.1 L1078.8 188.1Z" fill="#f7f40e" stroke="#fdfd9a" stroke-width="0.9"/><path d="M1079.4 168.7L1081.2 183.6" stroke="#dcd628" stroke-width="1.2"/><path d="M1082.3 168.7L1084.1 183.6" stroke="#dcd628" stroke-width="1.2"/><rect x="1078.4" y="161.9" width="4.9" height="2.4" fill="#dcd628"/><path d="M1089.2 158.3 L1099.5 158.3 L1102.8 188.7 L1092.5 188.7Z" fill="#f7f40e" stroke="#fdfd9a" stroke-width="0.9"/><path d="M1093.3 168.9L1095.1 184.2" stroke="#dcd628" stroke-width="1.2"/><path d="M1096.4 168.9L1098.2 184.2" stroke="#dcd628" stroke-width="1.2"/><rect x="1092.3" y="161.9" width="5.1" height="2.4" fill="#dcd628"/><path d="M1102.5 158.2 L1113.0 158.2 L1116.1 189.3 L1105.7 189.3Z" fill="#f7f40e" stroke="#fdfd9a" stroke-width="0.9"/><path d="M1106.6 169.1L1108.4 184.7" stroke="#dcd628" stroke-width="1.3"/><path d="M1109.8 169.1L1111.5 184.7" stroke="#dcd628" stroke-width="1.3"/><rect x="1105.6" y="162.0" width="5.2" height="2.5" fill="#dcd628"/><path d="M1115.0 158.2 L1123.7 158.2 L1126.8 189.9 L1118.1 189.9Z" fill="#f7f40e" stroke="#fdfd9a" stroke-width="0.9"/><path d="M1118.5 169.3L1120.2 185.2" stroke="#dcd628" stroke-width="1.2"/><path d="M1121.2 169.3L1122.8 185.2" stroke="#dcd628" stroke-width="1.2"/><rect x="1117.6" y="162.0" width="4.4" height="2.5" fill="#dcd628"/><path d="M1126.7 158.2 L1137.6 158.2 L1140.6 190.5 L1129.7 190.5Z" fill="#f7f40e" stroke="#fdfd9a" stroke-width="0.9"/><path d="M1130.9 169.5L1132.5 185.6" stroke="#dcd628" stroke-width="1.3"/><path d="M1134.1 169.5L1135.8 185.6" stroke="#dcd628" stroke-width="1.3"/><rect x="1129.9" y="162.1" width="5.4" height="2.6" fill="#dcd628"/><path d="M1140.6 158.1 L1151.2 158.1 L1154.0 191.1 L1143.4 191.1Z" fill="#f7f40e" stroke="#fdfd9a" stroke-width="0.9"/><path d="M1144.6 169.7L1146.2 186.2" stroke="#dcd628" stroke-width="1.3"/><path d="M1147.8 169.7L1149.4 186.2" stroke="#dcd628" stroke-width="1.3"/><rect x="1143.7" y="162.1" width="5.3" height="2.6" fill="#dcd628"/><path d="M1154.2 158.1 L1165.7 158.1 L1168.5 191.8 L1156.9 191.8Z" fill="#f7f40e" stroke="#fdfd9a" stroke-width="0.9"/><path d="M1158.5 169.9L1160.0 186.7" stroke="#dcd628" stroke-width="1.4"/><path d="M1161.9 169.9L1163.4 186.7" stroke="#dcd628" stroke-width="1.4"/><rect x="1157.5" y="162.1" width="5.8" height="2.7" fill="#dcd628"/><path d="M1167.7 158.1 L1178.9 158.1 L1181.5 192.4 L1170.3 192.4Z" fill="#f7f40e" stroke="#fdfd9a" stroke-width="0.9"/><path d="M1171.9 170.1L1173.3 187.2" stroke="#dcd628" stroke-width="1.3"/><path d="M1175.2 170.1L1176.6 187.2" stroke="#dcd628" stroke-width="1.3"/><rect x="1170.9" y="162.2" width="5.6" height="2.7" fill="#dcd628"/><path d="M1180.9 158.0 L1193.2 158.0 L1195.7 193.0 L1183.4 193.0Z" fill="#f7f40e" stroke="#fdfd9a" stroke-width="0.9"/><path d="M1185.3 170.3L1186.7 187.8" stroke="#dcd628" stroke-width="1.5"/><path d="M1189.0 170.3L1190.4 187.8" stroke="#dcd628" stroke-width="1.5"/><rect x="1184.4" y="162.2" width="6.2" height="2.8" fill="#dcd628"/><path d="M1196.2 158.0 L1208.2 158.0 L1210.5 193.7 L1198.5 193.7Z" fill="#f7f40e" stroke="#fdfd9a" stroke-width="0.9"/><path d="M1200.5 170.5L1201.8 188.4" stroke="#dcd628" stroke-width="1.4"/><path d="M1204.1 170.5L1205.4 188.4" stroke="#dcd628" stroke-width="1.4"/><rect x="1199.6" y="162.3" width="6.0" height="2.9" fill="#dcd628"/><path d="M1210.2 157.9 L1222.0 157.9 L1224.2 194.4 L1212.3 194.4Z" fill="#f7f40e" stroke="#fdfd9a" stroke-width="0.9"/><path d="M1214.4 170.7L1215.6 188.9" stroke="#dcd628" stroke-width="1.4"/><path d="M1217.9 170.7L1219.1 188.9" stroke="#dcd628" stroke-width="1.4"/><rect x="1213.5" y="162.3" width="5.9" height="2.9" fill="#dcd628"/><path d="M1226.0 157.9 L1237.0 157.9 L1239.0 195.1 L1228.0 195.1Z" fill="#f7f40e" stroke="#fdfd9a" stroke-width="0.9"/><path d="M1229.9 170.9L1231.0 189.5" stroke="#dcd628" stroke-width="1.3"/><path d="M1233.2 170.9L1234.3 189.5" stroke="#dcd628" stroke-width="1.3"/><rect x="1229.1" y="162.4" width="5.5" height="3.0" fill="#dcd628"/><path d="M1239.0 157.9 L1250.8 157.9 L1252.6 195.7 L1240.8 195.7Z" fill="#f7f40e" stroke="#fdfd9a" stroke-width="0.9"/><path d="M1243.1 171.1L1244.1 190.0" stroke="#dcd628" stroke-width="1.4"/><path d="M1246.6 171.1L1247.6 190.0" stroke="#dcd628" stroke-width="1.4"/><rect x="1242.2" y="162.4" width="5.9" height="3.0" fill="#dcd628"/><path d="M1252.8 157.8 L1265.7 157.8 L1267.3 196.4 L1254.4 196.4Z" fill="#f7f40e" stroke="#fdfd9a" stroke-width="0.9"/><path d="M1257.1 171.3L1258.0 190.6" stroke="#dcd628" stroke-width="1.6"/><path d="M1261.0 171.3L1261.9 190.6" stroke="#dcd628" stroke-width="1.6"/><rect x="1256.2" y="162.4" width="6.5" height="3.1" fill="#dcd628"/><path d="M1269.7 157.8 L1282.8 157.8 L1284.2 197.1 L1271.1 197.1Z" fill="#f7f40e" stroke="#fdfd9a" stroke-width="0.9"/><path d="M1274.1 171.6L1274.8 191.2" stroke="#dcd628" stroke-width="1.6"/><path d="M1278.0 171.6L1278.8 191.2" stroke="#dcd628" stroke-width="1.6"/><rect x="1273.2" y="162.5" width="6.5" height="3.2" fill="#dcd628"/><path d="M1285.8 157.7 L1300.5 157.7 L1301.7 197.9 L1287.0 197.9Z" fill="#f7f40e" stroke="#fdfd9a" stroke-width="0.9"/><path d="M1290.6 171.8L1291.2 191.9" stroke="#dcd628" stroke-width="1.8"/><path d="M1295.0 171.8L1295.6 191.9" stroke="#dcd628" stroke-width="1.8"/><rect x="1289.6" y="162.5" width="7.3" height="3.2" fill="#dcd628"/><path d="M1302.5 157.7 L1315.8 157.7 L1316.8 198.7 L1303.4 198.7Z" fill="#f7f40e" stroke="#fdfd9a" stroke-width="0.9"/><path d="M1306.8 172.0L1307.3 192.5" stroke="#dcd628" stroke-width="1.6"/><path d="M1310.8 172.0L1311.3 192.5" stroke="#dcd628" stroke-width="1.6"/><rect x="1306.0" y="162.6" width="6.7" height="3.3" fill="#dcd628"/><path d="M1319.8 157.6 L1335.1 157.6 L1335.8 199.5 L1320.5 199.5Z" fill="#f7f40e" stroke="#fdfd9a" stroke-width="0.9"/><path d="M1324.6 172.3L1325.0 193.2" stroke="#dcd628" stroke-width="1.8"/><path d="M1329.2 172.3L1329.6 193.2" stroke="#dcd628" stroke-width="1.8"/><rect x="1323.8" y="162.6" width="7.6" height="3.3" fill="#dcd628"/><path d="M1338.1 157.6 L1353.6 157.6 L1354.0 200.3 L1338.5 200.3Z" fill="#f7f40e" stroke="#fdfd9a" stroke-width="0.9"/><path d="M1342.9 172.5L1343.1 193.9" stroke="#dcd628" stroke-width="1.9"/><path d="M1347.5 172.5L1347.8 193.9" stroke="#dcd628" stroke-width="1.9"/><rect x="1342.1" y="162.7" width="7.7" height="3.4" fill="#dcd628"/><path d="M1357.6 157.5 L1363.0 157.5 L1363.1 201.2 L1357.7 201.2Z" fill="#f7f40e" stroke="#fdfd9a" stroke-width="0.9"/><path d="M1024.0 190.2 L1032.4 190.2 L1036.3 220.2 L1028.0 220.2Z" fill="#f7f40e" stroke="#fdfd9a" stroke-width="0.9"/><path d="M1027.7 200.7L1029.9 215.7" stroke="#dcd628" stroke-width="1.2"/><path d="M1030.2 200.7L1032.4 215.7" stroke="#dcd628" stroke-width="1.2"/><rect x="1026.7" y="193.8" width="4.2" height="2.4" fill="#dcd628"/><path d="M1036.4 190.8 L1044.5 190.8 L1048.4 221.5 L1040.3 221.5Z" fill="#f7f40e" stroke="#fdfd9a" stroke-width="0.9"/><path d="M1040.0 201.5L1042.1 216.9" stroke="#dcd628" stroke-width="1.2"/><path d="M1042.4 201.5L1044.6 216.9" stroke="#dcd628" stroke-width="1.2"/><rect x="1039.0" y="194.5" width="4.1" height="2.5" fill="#dcd628"/><path d="M1047.5 191.3 L1056.4 191.3 L1060.3 222.7 L1051.4 222.7Z" fill="#f7f40e" stroke="#fdfd9a" stroke-width="0.9"/><path d="M1051.4 202.3L1053.5 218.0" stroke="#dcd628" stroke-width="1.2"/><path d="M1054.0 202.3L1056.1 218.0" stroke="#dcd628" stroke-width="1.2"/><rect x="1050.3" y="195.1" width="4.4" height="2.5" fill="#dcd628"/><path d="M1059.4 191.8 L1069.2 191.8 L1073.0 224.0 L1063.2 224.0Z" fill="#f7f40e" stroke="#fdfd9a" stroke-width="0.9"/><path d="M1063.5 203.1L1065.6 219.2" stroke="#dcd628" stroke-width="1.2"/><path d="M1066.4 203.1L1068.5 219.2" stroke="#dcd628" stroke-width="1.2"/><rect x="1062.4" y="195.7" width="4.9" height="2.6" fill="#dcd628"/><path d="M1073.2 192.5 L1080.9 192.5 L1084.6 225.5 L1076.9 225.5Z" fill="#f7f40e" stroke="#fdfd9a" stroke-width="0.9"/><path d="M1076.6 204.0L1078.7 220.5" stroke="#dcd628" stroke-width="1.2"/><path d="M1079.0 204.0L1081.0 220.5" stroke="#dcd628" stroke-width="1.2"/><rect x="1075.7" y="196.4" width="3.8" height="2.6" fill="#dcd628"/><path d="M1083.9 193.0 L1093.1 193.0 L1096.8 226.6 L1087.6 226.6Z" fill="#f7f40e" stroke="#fdfd9a" stroke-width="0.9"/><path d="M1087.8 204.7L1089.8 221.6" stroke="#dcd628" stroke-width="1.2"/><path d="M1090.5 204.7L1092.5 221.6" stroke="#dcd628" stroke-width="1.2"/><rect x="1086.8" y="197.0" width="4.6" height="2.7" fill="#dcd628"/><path d="M1095.1 193.5 L1103.4 193.5 L1107.0 227.8 L1098.7 227.8Z" fill="#f7f40e" stroke="#fdfd9a" stroke-width="0.9"/><path d="M1098.7 205.5L1100.6 222.7" stroke="#dcd628" stroke-width="1.2"/><path d="M1101.2 205.5L1103.1 222.7" stroke="#dcd628" stroke-width="1.2"/><rect x="1097.7" y="197.6" width="4.2" height="2.7" fill="#dcd628"/><path d="M1105.4 194.0 L1115.6 194.0 L1119.1 228.9 L1108.9 228.9Z" fill="#f7f40e" stroke="#fdfd9a" stroke-width="0.9"/><path d="M1109.5 206.2L1111.5 223.7" stroke="#dcd628" stroke-width="1.2"/><path d="M1112.6 206.2L1114.5 223.7" stroke="#dcd628" stroke-width="1.2"/><rect x="1108.5" y="198.2" width="5.1" height="2.8" fill="#dcd628"/><path d="M1119.6 194.6 L1129.6 194.6 L1133.0 230.4 L1123.0 230.4Z" fill="#f7f40e" stroke="#fdfd9a" stroke-width="0.9"/><path d="M1123.6 207.2L1125.5 225.1" stroke="#dcd628" stroke-width="1.2"/><path d="M1126.6 207.2L1128.5 225.1" stroke="#dcd628" stroke-width="1.2"/><rect x="1122.6" y="198.9" width="5.0" height="2.9" fill="#dcd628"/><path d="M1131.6 195.2 L1143.7 195.2 L1147.0 231.7 L1134.9 231.7Z" fill="#f7f40e" stroke="#fdfd9a" stroke-width="0.9"/><path d="M1136.2 208.0L1138.0 226.2" stroke="#dcd628" stroke-width="1.4"/><path d="M1139.8 208.0L1141.6 226.2" stroke="#dcd628" stroke-width="1.4"/><rect x="1135.1" y="199.6" width="6.0" height="2.9" fill="#dcd628"/><path d="M1147.7 196.0 L1158.6 196.0 L1161.8 233.4 L1150.8 233.4Z" fill="#f7f40e" stroke="#fdfd9a" stroke-width="0.9"/><path d="M1151.9 209.1L1153.6 227.8" stroke="#dcd628" stroke-width="1.3"/><path d="M1155.2 209.1L1156.9 227.8" stroke="#dcd628" stroke-width="1.3"/><rect x="1150.9" y="200.5" width="5.5" height="3.0" fill="#dcd628"/><path d="M1161.6 196.6 L1174.4 196.6 L1177.4 234.9 L1164.6 234.9Z" fill="#f7f40e" stroke="#fdfd9a" stroke-width="0.9"/><path d="M1166.4 210.0L1168.0 229.2" stroke="#dcd628" stroke-width="1.5"/><path d="M1170.2 210.0L1171.9 229.2" stroke="#dcd628" stroke-width="1.5"/><rect x="1165.3" y="201.2" width="6.4" height="3.1" fill="#dcd628"/><path d="M1177.4 197.3 L1190.6 197.3 L1193.4 236.6 L1180.3 236.6Z" fill="#f7f40e" stroke="#fdfd9a" stroke-width="0.9"/><path d="M1182.2 211.1L1183.8 230.7" stroke="#dcd628" stroke-width="1.6"/><path d="M1186.2 211.1L1187.7 230.7" stroke="#dcd628" stroke-width="1.6"/><rect x="1181.1" y="202.1" width="6.6" height="3.1" fill="#dcd628"/><path d="M1194.6 198.1 L1206.7 198.1 L1209.3 238.5 L1197.2 238.5Z" fill="#f7f40e" stroke="#fdfd9a" stroke-width="0.9"/><path d="M1199.0 212.3L1200.5 232.4" stroke="#dcd628" stroke-width="1.4"/><path d="M1202.6 212.3L1204.1 232.4" stroke="#dcd628" stroke-width="1.4"/><rect x="1198.0" y="203.0" width="6.0" height="3.2" fill="#dcd628"/><path d="M1208.7 198.8 L1221.0 198.8 L1223.5 240.0 L1211.1 240.0Z" fill="#f7f40e" stroke="#fdfd9a" stroke-width="0.9"/><path d="M1213.1 213.2L1214.5 233.8" stroke="#dcd628" stroke-width="1.5"/><path d="M1216.8 213.2L1218.2 233.8" stroke="#dcd628" stroke-width="1.5"/><rect x="1212.1" y="203.7" width="6.2" height="3.3" fill="#dcd628"/><path d="M1223.0 199.5 L1235.1 199.5 L1237.4 241.5 L1225.3 241.5Z" fill="#f7f40e" stroke="#fdfd9a" stroke-width="0.9"/><path d="M1227.3 214.2L1228.6 235.2" stroke="#dcd628" stroke-width="1.5"/><path d="M1231.0 214.2L1232.2 235.2" stroke="#dcd628" stroke-width="1.5"/><rect x="1226.4" y="204.5" width="6.0" height="3.4" fill="#dcd628"/><path d="M1239.1 200.2 L1251.8 200.2 L1253.8 243.2 L1241.2 243.2Z" fill="#f7f40e" stroke="#fdfd9a" stroke-width="0.9"/><path d="M1243.5 215.3L1244.7 236.8" stroke="#dcd628" stroke-width="1.5"/><path d="M1247.3 215.3L1248.5 236.8" stroke="#dcd628" stroke-width="1.5"/><rect x="1242.6" y="205.4" width="6.3" height="3.4" fill="#dcd628"/><path d="M1255.8 201.0 L1267.2 201.0 L1269.1 245.0 L1257.6 245.0Z" fill="#f7f40e" stroke="#fdfd9a" stroke-width="0.9"/><path d="M1259.8 216.4L1260.8 238.4" stroke="#dcd628" stroke-width="1.4"/><path d="M1263.2 216.4L1264.2 238.4" stroke="#dcd628" stroke-width="1.4"/><rect x="1258.9" y="206.3" width="5.7" height="3.5" fill="#dcd628"/><path d="M1269.2 201.6 L1284.3 201.6 L1285.9 246.5 L1270.9 246.5Z" fill="#f7f40e" stroke="#fdfd9a" stroke-width="0.9"/><path d="M1274.2 217.3L1275.1 239.7" stroke="#dcd628" stroke-width="1.8"/><path d="M1278.7 217.3L1279.6 239.7" stroke="#dcd628" stroke-width="1.8"/><rect x="1273.2" y="207.0" width="7.5" height="3.6" fill="#dcd628"/><path d="M1287.3 202.5 L1302.5 202.5 L1303.9 248.4 L1288.6 248.4Z" fill="#f7f40e" stroke="#fdfd9a" stroke-width="0.9"/><path d="M1292.3 218.5L1293.0 241.5" stroke="#dcd628" stroke-width="1.8"/><path d="M1296.8 218.5L1297.6 241.5" stroke="#dcd628" stroke-width="1.8"/><rect x="1291.3" y="208.0" width="7.6" height="3.7" fill="#dcd628"/><path d="M1305.5 203.3 L1320.2 203.3 L1321.3 250.3 L1306.6 250.3Z" fill="#f7f40e" stroke="#fdfd9a" stroke-width="0.9"/><path d="M1310.3 219.8L1310.8 243.3" stroke="#dcd628" stroke-width="1.8"/><path d="M1314.7 219.8L1315.3 243.3" stroke="#dcd628" stroke-width="1.8"/><rect x="1309.4" y="209.0" width="7.4" height="3.8" fill="#dcd628"/><path d="M1322.2 204.1 L1336.1 204.1 L1336.9 252.1 L1323.0 252.1Z" fill="#f7f40e" stroke="#fdfd9a" stroke-width="0.9"/><path d="M1326.6 220.9L1327.0 244.9" stroke="#dcd628" stroke-width="1.7"/><path d="M1330.8 220.9L1331.2 244.9" stroke="#dcd628" stroke-width="1.7"/><rect x="1325.8" y="209.9" width="6.9" height="3.8" fill="#dcd628"/><path d="M1340.1 204.9 L1356.0 204.9 L1356.4 254.0 L1340.5 254.0Z" fill="#f7f40e" stroke="#fdfd9a" stroke-width="0.9"/><path d="M1345.0 222.1L1345.2 246.7" stroke="#dcd628" stroke-width="1.9"/><path d="M1349.8 222.1L1350.0 246.7" stroke="#dcd628" stroke-width="1.9"/><rect x="1344.1" y="210.8" width="7.9" height="3.9" fill="#dcd628"/><path d="M1358.0 205.8 L1363.0 205.8 L1363.1 256.0 L1358.1 256.0Z" fill="#f7f40e" stroke="#fdfd9a" stroke-width="0.9"/><path d="M1034.0 225.8 L1041.5 225.8 L1044.9 252.4 L1037.4 252.4Z" fill="#f7f40e" stroke="#fdfd9a" stroke-width="0.9"/><path d="M1037.3 235.1L1039.2 248.4" stroke="#dcd628" stroke-width="1.2"/><path d="M1039.5 235.1L1041.4 248.4" stroke="#dcd628" stroke-width="1.2"/><rect x="1036.4" y="228.9" width="3.8" height="2.1" fill="#dcd628"/><path d="M1043.5 226.8 L1052.5 226.8 L1055.9 254.0 L1046.9 254.0Z" fill="#f7f40e" stroke="#fdfd9a" stroke-width="0.9"/><path d="M1047.2 236.3L1049.1 249.9" stroke="#dcd628" stroke-width="1.2"/><path d="M1049.9 236.3L1051.8 249.9" stroke="#dcd628" stroke-width="1.2"/><rect x="1046.3" y="230.0" width="4.5" height="2.2" fill="#dcd628"/><path d="M1054.5 227.9 L1063.4 227.9 L1066.8 255.9 L1057.8 255.9Z" fill="#f7f40e" stroke="#fdfd9a" stroke-width="0.9"/><path d="M1058.2 237.7L1060.0 251.7" stroke="#dcd628" stroke-width="1.2"/><path d="M1060.9 237.7L1062.7 251.7" stroke="#dcd628" stroke-width="1.2"/><rect x="1057.2" y="231.3" width="4.5" height="2.2" fill="#dcd628"/><path d="M1065.4 229.1 L1074.1 229.1 L1077.4 257.8 L1068.8 257.8Z" fill="#f7f40e" stroke="#fdfd9a" stroke-width="0.9"/><path d="M1069.0 239.2L1070.9 253.5" stroke="#dcd628" stroke-width="1.2"/><path d="M1071.6 239.2L1073.5 253.5" stroke="#dcd628" stroke-width="1.2"/><rect x="1068.1" y="232.6" width="4.3" height="2.3" fill="#dcd628"/><path d="M1094.0 233.2 L1106.6 233.2 L1109.5 261.3 L1096.9 261.3Z" fill="#f7f40e" stroke="#fdfd9a" stroke-width="0.9"/><path d="M1098.7 243.0L1100.3 257.1" stroke="#dcd628" stroke-width="1.5"/><path d="M1102.4 243.0L1104.0 257.1" stroke="#dcd628" stroke-width="1.5"/><rect x="1097.6" y="236.6" width="6.3" height="2.2" fill="#dcd628"/><path d="M1110.6 235.0 L1124.7 235.0 L1127.6 264.2 L1113.4 264.2Z" fill="#f7f40e" stroke="#fdfd9a" stroke-width="0.9"/><path d="M1115.7 245.2L1117.3 259.8" stroke="#dcd628" stroke-width="1.7"/><path d="M1119.9 245.2L1121.5 259.8" stroke="#dcd628" stroke-width="1.7"/><rect x="1114.5" y="238.5" width="7.1" height="2.3" fill="#dcd628"/><path d="M1128.7 236.9 L1142.1 236.9 L1144.9 267.3 L1131.5 267.3Z" fill="#f7f40e" stroke="#fdfd9a" stroke-width="0.9"/><path d="M1133.6 247.5L1135.1 262.8" stroke="#dcd628" stroke-width="1.6"/><path d="M1137.6 247.5L1139.1 262.8" stroke="#dcd628" stroke-width="1.6"/><rect x="1132.5" y="240.6" width="6.7" height="2.4" fill="#dcd628"/><path d="M1146.1 238.8 L1160.3 238.8 L1163.0 270.3 L1148.8 270.3Z" fill="#f7f40e" stroke="#fdfd9a" stroke-width="0.9"/><path d="M1151.2 249.8L1152.6 265.6" stroke="#dcd628" stroke-width="1.7"/><path d="M1155.4 249.8L1156.9 265.6" stroke="#dcd628" stroke-width="1.7"/><rect x="1150.1" y="242.6" width="7.1" height="2.5" fill="#dcd628"/><path d="M1164.3 240.7 L1178.5 240.7 L1181.0 273.5 L1166.9 273.5Z" fill="#f7f40e" stroke="#fdfd9a" stroke-width="0.9"/><path d="M1169.3 252.2L1170.7 268.6" stroke="#dcd628" stroke-width="1.7"/><path d="M1173.6 252.2L1175.0 268.6" stroke="#dcd628" stroke-width="1.7"/><rect x="1168.3" y="244.6" width="7.1" height="2.6" fill="#dcd628"/><path d="M1182.5 242.7 L1196.2 242.7 L1198.6 276.7 L1184.9 276.7Z" fill="#f7f40e" stroke="#fdfd9a" stroke-width="0.9"/><path d="M1187.3 254.6L1188.6 271.6" stroke="#dcd628" stroke-width="1.6"/><path d="M1191.5 254.6L1192.8 271.6" stroke="#dcd628" stroke-width="1.6"/><rect x="1186.3" y="246.7" width="6.9" height="2.7" fill="#dcd628"/><path d="M1200.2 244.6 L1216.2 244.6 L1218.4 279.7 L1202.5 279.7Z" fill="#f7f40e" stroke="#fdfd9a" stroke-width="0.9"/><path d="M1205.7 256.9L1206.9 274.5" stroke="#dcd628" stroke-width="1.9"/><path d="M1210.5 256.9L1211.7 274.5" stroke="#dcd628" stroke-width="1.9"/><rect x="1204.5" y="248.8" width="8.0" height="2.8" fill="#dcd628"/><path d="M1220.2 246.7 L1235.6 246.7 L1237.7 283.2 L1222.2 283.2Z" fill="#f7f40e" stroke="#fdfd9a" stroke-width="0.9"/><path d="M1225.4 259.5L1226.5 277.7" stroke="#dcd628" stroke-width="1.9"/><path d="M1230.1 259.5L1231.2 277.7" stroke="#dcd628" stroke-width="1.9"/><rect x="1224.3" y="251.1" width="7.7" height="2.9" fill="#dcd628"/><path d="M1239.6 248.8 L1255.4 248.8 L1257.2 286.6 L1241.5 286.6Z" fill="#f7f40e" stroke="#fdfd9a" stroke-width="0.9"/><path d="M1244.9 262.0L1245.9 280.9" stroke="#dcd628" stroke-width="1.9"/><path d="M1249.6 262.0L1250.6 280.9" stroke="#dcd628" stroke-width="1.9"/><rect x="1243.9" y="253.3" width="7.9" height="3.0" fill="#dcd628"/><path d="M1258.4 250.8 L1268.0 250.8 L1269.6 289.8 L1260.0 289.8Z" fill="#f7f40e" stroke="#fdfd9a" stroke-width="0.9"/><path d="M1261.8 264.5L1262.6 284.0" stroke="#dcd628" stroke-width="1.2"/><path d="M1264.6 264.5L1265.5 284.0" stroke="#dcd628" stroke-width="1.2"/><rect x="1261.0" y="255.5" width="4.8" height="3.1" fill="#dcd628"/><path d="M1306.0 255.9 L1323.7 255.9 L1324.7 298.1 L1306.9 298.1Z" fill="#f7f40e" stroke="#fdfd9a" stroke-width="0.9"/><path d="M1311.6 270.7L1312.1 291.8" stroke="#dcd628" stroke-width="2.1"/><path d="M1316.9 270.7L1317.4 291.8" stroke="#dcd628" stroke-width="2.1"/><rect x="1310.6" y="261.0" width="8.9" height="3.4" fill="#dcd628"/><path d="M1327.7 258.2 L1342.7 258.2 L1343.3 301.9 L1328.3 301.9Z" fill="#f7f40e" stroke="#fdfd9a" stroke-width="0.9"/><path d="M1332.4 273.5L1332.7 295.3" stroke="#dcd628" stroke-width="1.8"/><path d="M1336.9 273.5L1337.2 295.3" stroke="#dcd628" stroke-width="1.8"/><rect x="1331.5" y="263.5" width="7.5" height="3.5" fill="#dcd628"/><path d="M1346.7 260.3 L1355.0 260.3 L1355.3 305.2 L1347.0 305.2Z" fill="#f7f40e" stroke="#fdfd9a" stroke-width="0.9"/><path d="M1349.3 276.0L1349.4 298.4" stroke="#dcd628" stroke-width="1.2"/><path d="M1351.8 276.0L1351.9 298.4" stroke="#dcd628" stroke-width="1.2"/><rect x="1348.8" y="265.6" width="4.2" height="3.6" fill="#dcd628"/><path d="M1130.4 194.7 L1144.8 194.7 L1147.8 227.4 L1133.3 227.4Z" fill="#f7f40e" stroke="#fdfd9a" stroke-width="0.9"/><path d="M1135.6 206.1L1137.2 222.5" stroke="#dcd628" stroke-width="1.7"/><path d="M1139.9 206.1L1141.6 222.5" stroke="#dcd628" stroke-width="1.7"/><rect x="1134.4" y="198.6" width="7.2" height="2.6" fill="#dcd628"/><path d="M1303.0 199.5 L1318.0 199.5 L1318.8 232.6 L1303.7 232.6Z" fill="#f7f40e" stroke="#fdfd9a" stroke-width="0.9"/><path d="M1307.7 211.1L1308.1 227.6" stroke="#dcd628" stroke-width="1.8"/><path d="M1312.2 211.1L1312.7 227.6" stroke="#dcd628" stroke-width="1.8"/><rect x="1306.9" y="203.5" width="7.5" height="2.6" fill="#dcd628"/><path d="M1085.9 191.3 L1098.7 191.3 L1101.6 218.3 L1088.8 218.3Z" fill="#f7f40e" stroke="#fdfd9a" stroke-width="0.9"/><path d="M1148.9 180.1 L1161.0 180.1 L1164.4 220.1 L1152.2 220.1Z" fill="#f7f40e" stroke="#fdfd9a" stroke-width="0.9"/><path d="M1325.6 188.1 L1339.7 188.1 L1340.2 218.7 L1326.1 218.7Z" fill="#f7f40e" stroke="#fdfd9a" stroke-width="0.9"/><path d="M1330.0 198.9L1330.2 214.2" stroke="#dcd628" stroke-width="1.7"/><path d="M1334.2 198.9L1334.5 214.2" stroke="#dcd628" stroke-width="1.7"/><rect x="1329.2" y="191.8" width="7.0" height="2.4" fill="#dcd628"/><path d="M1116.8 187.1 L1132.6 187.1 L1135.3 215.3 L1119.5 215.3Z" fill="#f7f40e" stroke="#fdfd9a" stroke-width="0.9"/><path d="M1119.3 189.4 L1135.0 189.4 L1138.2 223.1 L1122.5 223.1Z" fill="#f7f40e" stroke="#fdfd9a" stroke-width="0.9"/><path d="M1125.0 201.2L1126.8 218.1" stroke="#dcd628" stroke-width="1.9"/><path d="M1129.7 201.2L1131.4 218.1" stroke="#dcd628" stroke-width="1.9"/><rect x="1123.7" y="193.5" width="7.8" height="2.7" fill="#dcd628"/><path d="M1218.3 183.2 L1230.2 183.2 L1232.4 221.3 L1220.4 221.3Z" fill="#f7f40e" stroke="#fdfd9a" stroke-width="0.9"/><path d="M1222.5 196.6L1223.7 215.6" stroke="#dcd628" stroke-width="1.4"/><path d="M1226.1 196.6L1227.3 215.6" stroke="#dcd628" stroke-width="1.4"/><rect x="1221.6" y="187.8" width="6.0" height="3.0" fill="#dcd628"/><path d="M1299.6 211.2 L1311.6 211.2 L1312.6 249.7 L1300.5 249.7Z" fill="#f7f40e" stroke="#fdfd9a" stroke-width="0.9"/><path d="M1294.8 204.8 L1308.7 204.8 L1309.4 232.5 L1295.5 232.5Z" fill="#f7f40e" stroke="#fdfd9a" stroke-width="0.9"/><path d="M1299.2 214.5L1299.6 228.3" stroke="#dcd628" stroke-width="1.7"/><path d="M1303.3 214.5L1303.7 228.3" stroke="#dcd628" stroke-width="1.7"/><rect x="1298.4" y="208.1" width="7.0" height="2.2" fill="#dcd628"/><path d="M1312.4 210.6 L1324.4 210.6 L1325.2 249.1 L1313.2 249.1Z" fill="#f7f40e" stroke="#fdfd9a" stroke-width="0.9"/><path d="M1316.3 224.1L1316.7 243.3" stroke="#dcd628" stroke-width="1.4"/><path d="M1319.9 224.1L1320.3 243.3" stroke="#dcd628" stroke-width="1.4"/><rect x="1315.5" y="215.3" width="6.0" height="3.1" fill="#dcd628"/><path d="M1185.4 190.7 L1198.7 190.7 L1201.5 230.7 L1188.2 230.7Z" fill="#f7f40e" stroke="#fdfd9a" stroke-width="0.9"/><path d="M1190.2 204.7L1191.8 224.7" stroke="#dcd628" stroke-width="1.6"/><path d="M1194.2 204.7L1195.7 224.7" stroke="#dcd628" stroke-width="1.6"/><rect x="1189.2" y="195.5" width="6.6" height="3.2" fill="#dcd628"/><path d="M1092.4 195.0 L1103.8 195.0 L1108.1 234.9 L1096.6 234.9Z" fill="#f7f40e" stroke="#fdfd9a" stroke-width="0.9"/><path d="M1097.1 209.0L1099.4 229.0" stroke="#dcd628" stroke-width="1.4"/><path d="M1100.5 209.0L1102.8 229.0" stroke="#dcd628" stroke-width="1.4"/><rect x="1095.9" y="199.8" width="5.7" height="3.2" fill="#dcd628"/><path d="M1220.2 201.8 L1233.9 201.8 L1235.5 230.9 L1221.8 230.9Z" fill="#f7f40e" stroke="#fdfd9a" stroke-width="0.9"/><path d="M1238.0 187.9 L1252.1 187.9 L1253.5 216.2 L1239.4 216.2Z" fill="#f7f40e" stroke="#fdfd9a" stroke-width="0.9"/><path d="M1242.7 197.8L1243.4 212.0" stroke="#dcd628" stroke-width="1.7"/><path d="M1246.9 197.8L1247.7 212.0" stroke="#dcd628" stroke-width="1.7"/><rect x="1241.8" y="191.3" width="7.1" height="2.3" fill="#dcd628"/><path d="M1339.9 203.5 L1352.7 203.5 L1353.0 233.7 L1340.2 233.7Z" fill="#f7f40e" stroke="#fdfd9a" stroke-width="0.9"/><path d="M1343.8 214.1L1344.0 229.2" stroke="#dcd628" stroke-width="1.5"/><path d="M1347.7 214.1L1347.8 229.2" stroke="#dcd628" stroke-width="1.5"/><rect x="1343.2" y="207.1" width="6.4" height="2.4" fill="#dcd628"/><path d="M1103.1 197.1 L1118.1 197.1 L1121.3 228.3 L1106.2 228.3Z" fill="#f7f40e" stroke="#fdfd9a" stroke-width="0.9"/><path d="M1270.9 209.6 L1286.4 209.6 L1287.5 241.3 L1272.0 241.3Z" fill="#f7f40e" stroke="#fdfd9a" stroke-width="0.9"/><path d="M1349.4 211.3 L1363.3 211.3 L1363.5 244.2 L1349.6 244.2Z" fill="#f7f40e" stroke="#fdfd9a" stroke-width="0.9"/><path d="M1353.6 222.8L1353.7 239.3" stroke="#dcd628" stroke-width="1.7"/><path d="M1357.8 222.8L1357.9 239.3" stroke="#dcd628" stroke-width="1.7"/><rect x="1352.9" y="215.3" width="7.0" height="2.6" fill="#dcd628"/><path d="M1153.0 183.4 L1168.4 183.4 L1170.6 210.4 L1155.2 210.4Z" fill="#f7f40e" stroke="#fdfd9a" stroke-width="0.9"/><path d="M1297.8 207.7 L1311.2 207.7 L1311.9 234.5 L1298.5 234.5Z" fill="#f7f40e" stroke="#fdfd9a" stroke-width="0.9"/><path d="M1302.1 217.1L1302.4 230.4" stroke="#dcd628" stroke-width="1.6"/><path d="M1306.1 217.1L1306.5 230.4" stroke="#dcd628" stroke-width="1.6"/><rect x="1301.3" y="210.9" width="6.7" height="2.1" fill="#dcd628"/><path d="M1164.7 184.2 L1177.8 184.2 L1179.9 211.2 L1166.8 211.2Z" fill="#f7f40e" stroke="#fdfd9a" stroke-width="0.9"/><path d="M1169.3 193.6L1170.4 207.1" stroke="#dcd628" stroke-width="1.6"/><path d="M1173.2 193.6L1174.3 207.1" stroke="#dcd628" stroke-width="1.6"/><rect x="1168.3" y="187.4" width="6.5" height="2.2" fill="#dcd628"/><path d="M1332.3 207.0 L1348.2 207.0 L1348.6 239.7 L1332.7 239.7Z" fill="#f7f40e" stroke="#fdfd9a" stroke-width="0.9"/><path d="M1337.2 218.4L1337.4 234.8" stroke="#dcd628" stroke-width="1.9"/><path d="M1341.9 218.4L1342.1 234.8" stroke="#dcd628" stroke-width="1.9"/><rect x="1336.3" y="210.9" width="8.0" height="2.6" fill="#dcd628"/><path d="M1348.7 207.3 L1362.3 207.3 L1362.5 233.7 L1348.8 233.7Z" fill="#f7f40e" stroke="#fdfd9a" stroke-width="0.9"/><path d="M1352.8 216.5L1352.9 229.7" stroke="#dcd628" stroke-width="1.6"/><path d="M1356.9 216.5L1357.0 229.7" stroke="#dcd628" stroke-width="1.6"/><rect x="1352.1" y="210.4" width="6.8" height="2.1" fill="#dcd628"/><path d="M1315.5 209.7 L1330.5 209.7 L1331.1 244.1 L1316.2 244.1Z" fill="#f7f40e" stroke="#fdfd9a" stroke-width="0.9"/><path d="M1320.2 221.7L1320.6 239.0" stroke="#dcd628" stroke-width="1.8"/><path d="M1324.7 221.7L1325.0 239.0" stroke="#dcd628" stroke-width="1.8"/><rect x="1319.4" y="213.8" width="7.5" height="2.8" fill="#dcd628"/><path d="M1244.8 191.5 L1260.1 191.5 L1261.6 225.0 L1246.4 225.0Z" fill="#f7f40e" stroke="#fdfd9a" stroke-width="0.9"/><path d="M1249.8 203.2L1250.7 220.0" stroke="#dcd628" stroke-width="1.8"/><path d="M1254.4 203.2L1255.3 220.0" stroke="#dcd628" stroke-width="1.8"/><rect x="1248.9" y="195.5" width="7.6" height="2.7" fill="#dcd628"/><path d="M1296.3 203.7 L1307.3 203.7 L1308.3 243.1 L1297.3 243.1Z" fill="#f7f40e" stroke="#fdfd9a" stroke-width="0.9"/><path d="M1299.9 217.5L1300.5 237.2" stroke="#dcd628" stroke-width="1.3"/><path d="M1303.2 217.5L1303.8 237.2" stroke="#dcd628" stroke-width="1.3"/><rect x="1299.2" y="208.4" width="5.5" height="3.1" fill="#dcd628"/><path d="M1248.3 205.8 L1262.5 205.8 L1264.0 240.0 L1249.8 240.0Z" fill="#f7f40e" stroke="#fdfd9a" stroke-width="0.9"/><path d="M1253.0 217.8L1253.8 234.8" stroke="#dcd628" stroke-width="1.7"/><path d="M1257.3 217.8L1258.1 234.8" stroke="#dcd628" stroke-width="1.7"/><rect x="1252.0" y="209.9" width="7.1" height="2.7" fill="#dcd628"/><path d="M1196.5 204.8 L1212.3 204.8 L1214.1 232.7 L1198.3 232.7Z" fill="#f7f40e" stroke="#fdfd9a" stroke-width="0.9"/><path d="M1201.8 214.5L1202.8 228.5" stroke="#dcd628" stroke-width="1.9"/><path d="M1206.6 214.5L1207.6 228.5" stroke="#dcd628" stroke-width="1.9"/><rect x="1200.8" y="208.1" width="7.9" height="2.2" fill="#dcd628"/><path d="M1110.8 188.9 L1122.0 188.9 L1124.7 216.8 L1113.6 216.8Z" fill="#f7f40e" stroke="#fdfd9a" stroke-width="0.9"/><path d="M1265.2 198.4 L1276.8 198.4 L1278.0 229.0 L1266.4 229.0Z" fill="#f7f40e" stroke="#fdfd9a" stroke-width="0.9"/><path d="M1269.1 209.1L1269.7 224.4" stroke="#dcd628" stroke-width="1.4"/><path d="M1272.5 209.1L1273.2 224.4" stroke="#dcd628" stroke-width="1.4"/><rect x="1268.3" y="202.1" width="5.8" height="2.4" fill="#dcd628"/><path d="M1145.4 183.6 L1157.2 183.6 L1159.9 214.9 L1148.0 214.9Z" fill="#f7f40e" stroke="#fdfd9a" stroke-width="0.9"/><path d="M1236.3 201.6 L1247.5 201.6 L1249.4 239.8 L1238.1 239.8Z" fill="#f7f40e" stroke="#fdfd9a" stroke-width="0.9"/><path d="M1302.4 198.2 L1313.5 198.2 L1314.1 225.1 L1303.1 225.1Z" fill="#f7f40e" stroke="#fdfd9a" stroke-width="0.9"/><path d="M1133.2 184.9 L1147.8 184.9 L1151.0 220.6 L1136.4 220.6Z" fill="#f7f40e" stroke="#fdfd9a" stroke-width="0.9"/><path d="M1138.5 197.4L1140.3 215.2" stroke="#dcd628" stroke-width="1.7"/><path d="M1142.9 197.4L1144.7 215.2" stroke="#dcd628" stroke-width="1.7"/><rect x="1137.3" y="189.1" width="7.3" height="2.9" fill="#dcd628"/><path d="M1096.5 184.6 L1109.5 184.6 L1113.5 223.2 L1100.5 223.2Z" fill="#f7f40e" stroke="#fdfd9a" stroke-width="0.9"/><path d="M1101.6 198.1L1103.8 217.4" stroke="#dcd628" stroke-width="1.6"/><path d="M1105.5 198.1L1107.7 217.4" stroke="#dcd628" stroke-width="1.6"/><rect x="1100.4" y="189.2" width="6.5" height="3.1" fill="#dcd628"/><path d="M1223.4 207.1 L1237.1 207.1 L1238.6 234.5 L1224.8 234.5Z" fill="#f7f40e" stroke="#fdfd9a" stroke-width="0.9"/><path d="M1224.8 207.7 L1239.4 207.7 L1241.1 238.0 L1226.4 238.0Z" fill="#f7f40e" stroke="#fdfd9a" stroke-width="0.9"/><path d="M1232.0 158.0 L1363.0 157.0 L1363.0 250.0 L1232.0 243.0Z" fill="#f7f40e" stroke="#fdfd9a" stroke-width="0.8"/><path d="M1234.0 159.0 L1247.4 159.0 L1249.4 200.0 L1236.1 200.0Z" fill="#f7f40e" stroke="#fdfd9a" stroke-width="0.9"/><path d="M1238.6 173.3L1239.8 193.8" stroke="#dcd628" stroke-width="1.6"/><path d="M1242.6 173.3L1243.8 193.8" stroke="#dcd628" stroke-width="1.6"/><rect x="1237.6" y="163.9" width="6.7" height="3.3" fill="#dcd628"/><path d="M1248.4 159.0 L1261.7 159.0 L1263.5 200.0 L1250.2 200.0Z" fill="#f7f40e" stroke="#fdfd9a" stroke-width="0.9"/><path d="M1252.9 173.3L1253.9 193.8" stroke="#dcd628" stroke-width="1.6"/><path d="M1256.9 173.3L1257.9 193.8" stroke="#dcd628" stroke-width="1.6"/><rect x="1252.0" y="163.9" width="6.7" height="3.3" fill="#dcd628"/><path d="M1263.7 159.0 L1279.5 159.0 L1281.0 200.0 L1265.3 200.0Z" fill="#f7f40e" stroke="#fdfd9a" stroke-width="0.9"/><path d="M1268.9 173.3L1269.8 193.8" stroke="#dcd628" stroke-width="1.9"/><path d="M1273.6 173.3L1274.5 193.8" stroke="#dcd628" stroke-width="1.9"/><rect x="1267.9" y="163.9" width="7.9" height="3.3" fill="#dcd628"/><path d="M1281.5 159.0 L1296.5 159.0 L1297.8 200.0 L1282.8 200.0Z" fill="#f7f40e" stroke="#fdfd9a" stroke-width="0.9"/><path d="M1286.4 173.3L1287.1 193.8" stroke="#dcd628" stroke-width="1.8"/><path d="M1290.9 173.3L1291.6 193.8" stroke="#dcd628" stroke-width="1.8"/><rect x="1285.4" y="163.9" width="7.5" height="3.3" fill="#dcd628"/><path d="M1298.5 159.0 L1313.1 159.0 L1314.1 200.0 L1299.5 200.0Z" fill="#f7f40e" stroke="#fdfd9a" stroke-width="0.9"/><path d="M1303.2 173.3L1303.8 193.8" stroke="#dcd628" stroke-width="1.7"/><path d="M1307.6 173.3L1308.1 193.8" stroke="#dcd628" stroke-width="1.7"/><rect x="1302.3" y="163.9" width="7.3" height="3.3" fill="#dcd628"/><path d="M1315.1 159.0 L1329.0 159.0 L1329.7 200.0 L1315.8 200.0Z" fill="#f7f40e" stroke="#fdfd9a" stroke-width="0.9"/><path d="M1319.5 173.3L1319.9 193.8" stroke="#dcd628" stroke-width="1.7"/><path d="M1323.6 173.3L1324.1 193.8" stroke="#dcd628" stroke-width="1.7"/><rect x="1318.7" y="163.9" width="7.0" height="3.3" fill="#dcd628"/><path d="M1330.0 159.0 L1342.6 159.0 L1343.1 200.0 L1330.5 200.0Z" fill="#f7f40e" stroke="#fdfd9a" stroke-width="0.9"/><path d="M1333.9 173.3L1334.2 193.8" stroke="#dcd628" stroke-width="1.5"/><path d="M1337.7 173.3L1338.0 193.8" stroke="#dcd628" stroke-width="1.5"/><rect x="1333.2" y="163.9" width="6.3" height="3.3" fill="#dcd628"/><path d="M1344.6 159.0 L1359.4 159.0 L1359.7 200.0 L1344.9 200.0Z" fill="#f7f40e" stroke="#fdfd9a" stroke-width="0.9"/><path d="M1349.1 173.3L1349.3 193.8" stroke="#dcd628" stroke-width="1.8"/><path d="M1353.6 173.3L1353.7 193.8" stroke="#dcd628" stroke-width="1.8"/><rect x="1348.3" y="163.9" width="7.4" height="3.3" fill="#dcd628"/><path d="M1238.0 196.0 L1253.9 196.0 L1256.1 240.0 L1240.1 240.0Z" fill="#f7f40e" stroke="#fdfd9a" stroke-width="0.9"/><path d="M1243.4 211.4L1244.6 233.4" stroke="#dcd628" stroke-width="1.9"/><path d="M1248.2 211.4L1249.4 233.4" stroke="#dcd628" stroke-width="1.9"/><rect x="1242.3" y="201.3" width="8.0" height="3.5" fill="#dcd628"/><path d="M1255.9 196.0 L1271.4 196.0 L1273.3 240.0 L1257.8 240.0Z" fill="#f7f40e" stroke="#fdfd9a" stroke-width="0.9"/><path d="M1261.1 211.4L1262.1 233.4" stroke="#dcd628" stroke-width="1.9"/><path d="M1265.8 211.4L1266.8 233.4" stroke="#dcd628" stroke-width="1.9"/><rect x="1260.1" y="201.3" width="7.7" height="3.5" fill="#dcd628"/><path d="M1272.4 196.0 L1288.1 196.0 L1289.7 240.0 L1274.0 240.0Z" fill="#f7f40e" stroke="#fdfd9a" stroke-width="0.9"/><path d="M1277.6 211.4L1278.5 233.4" stroke="#dcd628" stroke-width="1.9"/><path d="M1282.3 211.4L1283.2 233.4" stroke="#dcd628" stroke-width="1.9"/><rect x="1276.6" y="201.3" width="7.9" height="3.5" fill="#dcd628"/><path d="M1290.1 196.0 L1305.5 196.0 L1306.8 240.0 L1291.4 240.0Z" fill="#f7f40e" stroke="#fdfd9a" stroke-width="0.9"/><path d="M1295.1 211.4L1295.8 233.4" stroke="#dcd628" stroke-width="1.8"/><path d="M1299.8 211.4L1300.4 233.4" stroke="#dcd628" stroke-width="1.8"/><rect x="1294.2" y="201.3" width="7.7" height="3.5" fill="#dcd628"/><path d="M1307.5 196.0 L1322.2 196.0 L1323.2 240.0 L1308.5 240.0Z" fill="#f7f40e" stroke="#fdfd9a" stroke-width="0.9"/><path d="M1312.2 211.4L1312.8 233.4" stroke="#dcd628" stroke-width="1.8"/><path d="M1316.7 211.4L1317.2 233.4" stroke="#dcd628" stroke-width="1.8"/><rect x="1311.4" y="201.3" width="7.4" height="3.5" fill="#dcd628"/><path d="M1324.2 196.0 L1338.3 196.0 L1338.9 240.0 L1324.9 240.0Z" fill="#f7f40e" stroke="#fdfd9a" stroke-width="0.9"/><path d="M1328.7 211.4L1329.0 233.4" stroke="#dcd628" stroke-width="1.7"/><path d="M1332.9 211.4L1333.2 233.4" stroke="#dcd628" stroke-width="1.7"/><rect x="1327.9" y="201.3" width="7.0" height="3.5" fill="#dcd628"/><path d="M1339.3 196.0 L1352.4 196.0 L1352.8 240.0 L1339.7 240.0Z" fill="#f7f40e" stroke="#fdfd9a" stroke-width="0.9"/><path d="M1343.3 211.4L1343.6 233.4" stroke="#dcd628" stroke-width="1.6"/><path d="M1347.3 211.4L1347.5 233.4" stroke="#dcd628" stroke-width="1.6"/><rect x="1342.6" y="201.3" width="6.5" height="3.5" fill="#dcd628"/><path d="M1354.4 196.0 L1362.0 196.0 L1362.1 240.0 L1354.5 240.0Z" fill="#f7f40e" stroke="#fdfd9a" stroke-width="0.9"/><path d="M1356.7 211.4L1356.8 233.4" stroke="#dcd628" stroke-width="1.2"/><path d="M1359.0 211.4L1359.1 233.4" stroke="#dcd628" stroke-width="1.2"/><rect x="1356.3" y="201.3" width="3.8" height="3.5" fill="#dcd628"/><path d="M1349.9 159.1 L1361.0 159.1 L1361.0 195.1 L1349.9 195.1Z" fill="#f8f530" stroke="#fdfd9a" stroke-width="0.9"/><path d="M1254.7 157.8 L1268.3 157.8 L1268.3 188.6 L1254.7 188.6Z" fill="#f8f530" stroke="#fdfd9a" stroke-width="0.9"/><path d="M1341.4 165.1 L1356.3 165.1 L1356.3 195.6 L1341.4 195.6Z" fill="#f8f530" stroke="#fdfd9a" stroke-width="0.9"/><path d="M1305.9 210.6 L1319.7 210.6 L1319.7 246.0 L1305.9 246.0Z" fill="#f8f530" stroke="#fdfd9a" stroke-width="0.9"/><path d="M1319.1 153.1 L1333.6 153.1 L1333.6 185.9 L1319.1 185.9Z" fill="#f8f530" stroke="#fdfd9a" stroke-width="0.9"/><path d="M1270.2 162.4 L1284.6 162.4 L1284.6 195.0 L1270.2 195.0Z" fill="#f8f530" stroke="#fdfd9a" stroke-width="0.9"/><path d="M1347.4 200.3 L1362.2 200.3 L1362.2 232.8 L1347.4 232.8Z" fill="#f8f530" stroke="#fdfd9a" stroke-width="0.9"/><path d="M1317.9 189.8 L1329.9 189.8 L1329.9 225.5 L1317.9 225.5Z" fill="#f8f530" stroke="#fdfd9a" stroke-width="0.9"/><path d="M1318.0 148.0 L1325.0 148.0 L1325.0 160.0 L1318.0 160.0Z" fill="#f7f40e" stroke="#fdfd9a" stroke-width="0.9"/><path d="M1357.0 144.0 L1364.0 144.0 L1364.0 156.0 L1357.0 156.0Z" fill="#f7f40e" stroke="#fdfd9a" stroke-width="0.9"/><path d="M1218.0 150.0 L1225.0 150.0 L1225.0 162.0 L1218.0 162.0Z" fill="#f7f40e" stroke="#fdfd9a" stroke-width="0.9"/><path d="M1123.0 148.0 L1130.0 148.0 L1130.0 160.0 L1123.0 160.0Z" fill="#f7f40e" stroke="#fdfd9a" stroke-width="0.9"/><path d="M1412.0 118.0 L1426.0 118.0 L1426.0 160.0 L1412.0 160.0Z" fill="#f7f40e" stroke="#fdfd9a" stroke-width="0.9"/><path d="M1416.2 132.7L1416.2 153.7" stroke="#dcd628" stroke-width="1.7"/><path d="M1420.4 132.7L1420.4 153.7" stroke="#dcd628" stroke-width="1.7"/><rect x="1415.5" y="123.0" width="7.0" height="3.4" fill="#dcd628"/><path d="M1428.8 118.8 L1442.8 118.8 L1442.8 160.0 L1428.8 160.0Z" fill="#f7f40e" stroke="#fdfd9a" stroke-width="0.9"/><path d="M1433.0 133.2L1433.0 153.8" stroke="#dcd628" stroke-width="1.7"/><path d="M1437.2 133.2L1437.2 153.8" stroke="#dcd628" stroke-width="1.7"/><rect x="1432.3" y="123.8" width="7.0" height="3.3" fill="#dcd628"/><path d="M1445.6 119.7 L1459.6 119.7 L1459.6 160.0 L1445.6 160.0Z" fill="#f7f40e" stroke="#fdfd9a" stroke-width="0.9"/><path d="M1449.8 133.8L1449.8 154.0" stroke="#dcd628" stroke-width="1.7"/><path d="M1454.0 133.8L1454.0 154.0" stroke="#dcd628" stroke-width="1.7"/><rect x="1449.1" y="124.5" width="7.0" height="3.2" fill="#dcd628"/><path d="M1462.4 120.5 L1476.4 120.5 L1476.4 160.0 L1462.4 160.0Z" fill="#f7f40e" stroke="#fdfd9a" stroke-width="0.9"/><path d="M1466.6 134.3L1466.6 154.1" stroke="#dcd628" stroke-width="1.7"/><path d="M1470.8 134.3L1470.8 154.1" stroke="#dcd628" stroke-width="1.7"/><rect x="1465.9" y="125.3" width="7.0" height="3.2" fill="#dcd628"/><path d="M1479.2 121.4 L1493.2 121.4 L1493.2 160.0 L1479.2 160.0Z" fill="#f7f40e" stroke="#fdfd9a" stroke-width="0.9"/><path d="M1483.4 134.9L1483.4 154.2" stroke="#dcd628" stroke-width="1.7"/><path d="M1487.6 134.9L1487.6 154.2" stroke="#dcd628" stroke-width="1.7"/><rect x="1482.7" y="126.0" width="7.0" height="3.1" fill="#dcd628"/><path d="M1496.0 122.2 L1509.5 122.2 L1509.5 160.0 L1496.0 160.0Z" fill="#f7f40e" stroke="#fdfd9a" stroke-width="0.9"/><path d="M1500.0 135.4L1500.0 154.3" stroke="#dcd628" stroke-width="1.6"/><path d="M1504.1 135.4L1504.1 154.3" stroke="#dcd628" stroke-width="1.6"/><rect x="1499.4" y="126.7" width="6.8" height="3.0" fill="#dcd628"/><path d="M1512.3 123.0 L1525.8 123.0 L1525.8 160.0 L1512.3 160.0Z" fill="#f7f40e" stroke="#fdfd9a" stroke-width="0.9"/><path d="M1516.3 136.0L1516.3 154.5" stroke="#dcd628" stroke-width="1.6"/><path d="M1520.4 136.0L1520.4 154.5" stroke="#dcd628" stroke-width="1.6"/><rect x="1515.7" y="127.5" width="6.8" height="3.0" fill="#dcd628"/><path d="M1528.6 123.8 L1542.1 123.8 L1542.1 160.0 L1528.6 160.0Z" fill="#f7f40e" stroke="#fdfd9a" stroke-width="0.9"/><path d="M1532.6 136.5L1532.6 154.6" stroke="#dcd628" stroke-width="1.6"/><path d="M1536.7 136.5L1536.7 154.6" stroke="#dcd628" stroke-width="1.6"/><rect x="1532.0" y="128.2" width="6.8" height="2.9" fill="#dcd628"/><path d="M1544.9 124.6 L1558.4 124.6 L1558.4 160.0 L1544.9 160.0Z" fill="#f7f40e" stroke="#fdfd9a" stroke-width="0.9"/><path d="M1548.9 137.0L1548.9 154.7" stroke="#dcd628" stroke-width="1.6"/><path d="M1553.0 137.0L1553.0 154.7" stroke="#dcd628" stroke-width="1.6"/><rect x="1548.3" y="128.9" width="6.8" height="2.8" fill="#dcd628"/><path d="M1561.2 125.5 L1574.7 125.5 L1574.7 160.0 L1561.2 160.0Z" fill="#f7f40e" stroke="#fdfd9a" stroke-width="0.9"/><path d="M1565.2 137.5L1565.2 154.8" stroke="#dcd628" stroke-width="1.6"/><path d="M1569.3 137.5L1569.3 154.8" stroke="#dcd628" stroke-width="1.6"/><rect x="1564.6" y="129.6" width="6.8" height="2.8" fill="#dcd628"/><path d="M1577.5 126.3 L1591.0 126.3 L1591.0 160.0 L1577.5 160.0Z" fill="#f7f40e" stroke="#fdfd9a" stroke-width="0.9"/><path d="M1581.5 138.1L1581.5 154.9" stroke="#dcd628" stroke-width="1.6"/><path d="M1585.6 138.1L1585.6 154.9" stroke="#dcd628" stroke-width="1.6"/><rect x="1580.9" y="130.3" width="6.8" height="2.7" fill="#dcd628"/><path d="M1593.8 127.1 L1607.3 127.1 L1607.3 160.0 L1593.8 160.0Z" fill="#f7f40e" stroke="#fdfd9a" stroke-width="0.9"/><path d="M1597.8 138.6L1597.8 155.1" stroke="#dcd628" stroke-width="1.6"/><path d="M1601.9 138.6L1601.9 155.1" stroke="#dcd628" stroke-width="1.6"/><rect x="1597.2" y="131.0" width="6.8" height="2.6" fill="#dcd628"/><path d="M1610.1 129.0 L1619.1 129.0 L1619.1 148.0 L1610.1 148.0Z" fill="#f7f40e" stroke="#fdfd9a" stroke-width="0.9"/><path d="M1612.8 135.7L1612.8 145.2" stroke="#dcd628" stroke-width="1.2"/><path d="M1615.5 135.7L1615.5 145.2" stroke="#dcd628" stroke-width="1.2"/><rect x="1612.3" y="131.3" width="4.5" height="1.5" fill="#dcd628"/><path d="M1363.0 158.0 L1470.0 158.0 L1470.0 243.0 L1363.0 258.0Z" fill="#f7f40e" stroke="#fdfd9a" stroke-width="0.8"/><path d="M1470.0 160.0 L1640.0 160.0 L1640.0 182.0 L1470.0 192.0Z" fill="#33373a" /><path d="M1366.0 160.3 L1381.3 160.3 L1381.3 197.8 L1366.0 197.8Z" fill="#f7f40e" stroke="#fdfd9a" stroke-width="0.9"/><path d="M1370.6 173.4L1370.6 192.2" stroke="#dcd628" stroke-width="1.8"/><path d="M1375.2 173.4L1375.2 192.2" stroke="#dcd628" stroke-width="1.8"/><rect x="1369.8" y="164.8" width="7.6" height="3.0" fill="#dcd628"/><path d="M1384.3 160.8 L1399.2 160.8 L1399.2 198.1 L1384.3 198.1Z" fill="#f7f40e" stroke="#fdfd9a" stroke-width="0.9"/><path d="M1388.8 173.8L1388.8 192.5" stroke="#dcd628" stroke-width="1.8"/><path d="M1393.2 173.8L1393.2 192.5" stroke="#dcd628" stroke-width="1.8"/><rect x="1388.0" y="165.2" width="7.5" height="3.0" fill="#dcd628"/><path d="M1403.2 160.3 L1416.9 160.3 L1416.9 195.9 L1403.2 195.9Z" fill="#f7f40e" stroke="#fdfd9a" stroke-width="0.9"/><path d="M1407.3 172.8L1407.3 190.6" stroke="#dcd628" stroke-width="1.6"/><path d="M1411.4 172.8L1411.4 190.6" stroke="#dcd628" stroke-width="1.6"/><rect x="1406.6" y="164.6" width="6.9" height="2.8" fill="#dcd628"/><path d="M1420.9 160.4 L1435.2 160.4 L1435.2 195.2 L1420.9 195.2Z" fill="#f7f40e" stroke="#fdfd9a" stroke-width="0.9"/><path d="M1425.2 172.6L1425.2 190.0" stroke="#dcd628" stroke-width="1.7"/><path d="M1429.5 172.6L1429.5 190.0" stroke="#dcd628" stroke-width="1.7"/><rect x="1424.5" y="164.6" width="7.1" height="2.8" fill="#dcd628"/><path d="M1438.2 160.3 L1455.0 160.3 L1455.0 194.6 L1438.2 194.6Z" fill="#f7f40e" stroke="#fdfd9a" stroke-width="0.9"/><path d="M1443.3 172.3L1443.3 189.4" stroke="#dcd628" stroke-width="2.0"/><path d="M1448.3 172.3L1448.3 189.4" stroke="#dcd628" stroke-width="2.0"/><rect x="1442.4" y="164.4" width="8.4" height="2.7" fill="#dcd628"/><path d="M1458.0 160.8 L1473.1 160.8 L1473.1 191.9 L1458.0 191.9Z" fill="#f7f40e" stroke="#fdfd9a" stroke-width="0.9"/><path d="M1462.5 171.7L1462.5 187.2" stroke="#dcd628" stroke-width="1.8"/><path d="M1467.0 171.7L1467.0 187.2" stroke="#dcd628" stroke-width="1.8"/><rect x="1461.8" y="164.5" width="7.5" height="2.5" fill="#dcd628"/><path d="M1477.1 160.6 L1492.8 160.6 L1492.8 192.2 L1477.1 192.2Z" fill="#f7f40e" stroke="#fdfd9a" stroke-width="0.9"/><path d="M1481.8 171.7L1481.8 187.4" stroke="#dcd628" stroke-width="1.9"/><path d="M1486.5 171.7L1486.5 187.4" stroke="#dcd628" stroke-width="1.9"/><rect x="1481.0" y="164.4" width="7.9" height="2.5" fill="#dcd628"/><path d="M1495.8 160.4 L1511.0 160.4 L1511.0 191.2 L1495.8 191.2Z" fill="#f7f40e" stroke="#fdfd9a" stroke-width="0.9"/><path d="M1500.4 171.1L1500.4 186.6" stroke="#dcd628" stroke-width="1.8"/><path d="M1504.9 171.1L1504.9 186.6" stroke="#dcd628" stroke-width="1.8"/><rect x="1499.6" y="164.1" width="7.6" height="2.5" fill="#dcd628"/><path d="M1513.0 160.8 L1527.3 160.8 L1527.3 186.8 L1513.0 186.8Z" fill="#f7f40e" stroke="#fdfd9a" stroke-width="0.9"/><path d="M1517.3 169.9L1517.3 182.9" stroke="#dcd628" stroke-width="1.7"/><path d="M1521.6 169.9L1521.6 182.9" stroke="#dcd628" stroke-width="1.7"/><rect x="1516.6" y="163.9" width="7.1" height="2.1" fill="#dcd628"/><path d="M1529.3 159.2 L1545.3 159.2 L1545.3 186.8 L1529.3 186.8Z" fill="#f7f40e" stroke="#fdfd9a" stroke-width="0.9"/><path d="M1534.1 168.9L1534.1 182.7" stroke="#dcd628" stroke-width="1.9"/><path d="M1538.9 168.9L1538.9 182.7" stroke="#dcd628" stroke-width="1.9"/><rect x="1533.3" y="162.6" width="8.0" height="2.2" fill="#dcd628"/><path d="M1547.3 159.6 L1562.3 159.6 L1562.3 185.7 L1547.3 185.7Z" fill="#f7f40e" stroke="#fdfd9a" stroke-width="0.9"/><path d="M1551.8 168.8L1551.8 181.8" stroke="#dcd628" stroke-width="1.8"/><path d="M1556.3 168.8L1556.3 181.8" stroke="#dcd628" stroke-width="1.8"/><rect x="1551.0" y="162.8" width="7.5" height="2.1" fill="#dcd628"/><path d="M1566.3 159.8 L1580.6 159.8 L1580.6 185.2 L1566.3 185.2Z" fill="#f7f40e" stroke="#fdfd9a" stroke-width="0.9"/><path d="M1570.6 168.7L1570.6 181.4" stroke="#dcd628" stroke-width="1.7"/><path d="M1574.9 168.7L1574.9 181.4" stroke="#dcd628" stroke-width="1.7"/><rect x="1569.9" y="162.8" width="7.1" height="2.0" fill="#dcd628"/><path d="M1582.6 159.7 L1599.1 159.7 L1599.1 182.2 L1582.6 182.2Z" fill="#f7f40e" stroke="#fdfd9a" stroke-width="0.9"/><path d="M1587.5 167.6L1587.5 178.8" stroke="#dcd628" stroke-width="2.0"/><path d="M1592.5 167.6L1592.5 178.8" stroke="#dcd628" stroke-width="2.0"/><rect x="1586.7" y="162.4" width="8.3" height="1.8" fill="#dcd628"/><path d="M1603.1 159.2 L1618.3 159.2 L1618.3 182.1 L1603.1 182.1Z" fill="#f7f40e" stroke="#fdfd9a" stroke-width="0.9"/><path d="M1607.6 167.2L1607.6 178.7" stroke="#dcd628" stroke-width="1.8"/><path d="M1612.2 167.2L1612.2 178.7" stroke="#dcd628" stroke-width="1.8"/><rect x="1606.9" y="162.0" width="7.6" height="1.8" fill="#dcd628"/><path d="M1620.3 159.0 L1636.5 159.0 L1636.5 179.5 L1620.3 179.5Z" fill="#f7f40e" stroke="#fdfd9a" stroke-width="0.9"/><path d="M1625.2 166.2L1625.2 176.5" stroke="#dcd628" stroke-width="1.9"/><path d="M1630.0 166.2L1630.0 176.5" stroke="#dcd628" stroke-width="1.9"/><rect x="1624.4" y="161.5" width="8.1" height="1.6" fill="#dcd628"/><path d="M1639.5 159.4 L1648.0 159.4 L1648.0 177.5 L1639.5 177.5Z" fill="#f7f40e" stroke="#fdfd9a" stroke-width="0.9"/><path d="M1642.1 165.7L1642.1 174.8" stroke="#dcd628" stroke-width="1.2"/><path d="M1644.6 165.7L1644.6 174.8" stroke="#dcd628" stroke-width="1.2"/><rect x="1641.7" y="161.6" width="4.2" height="1.5" fill="#dcd628"/><path d="M1366.0 206.7 L1381.1 206.7 L1381.1 256.5 L1366.0 256.5Z" fill="#f7f40e" stroke="#fdfd9a" stroke-width="0.9"/><path d="M1370.5 224.2L1370.5 249.1" stroke="#dcd628" stroke-width="1.8"/><path d="M1375.1 224.2L1375.1 249.1" stroke="#dcd628" stroke-width="1.8"/><rect x="1369.8" y="212.7" width="7.6" height="4.0" fill="#dcd628"/><path d="M1383.1 206.9 L1399.7 206.9 L1399.7 253.9 L1383.1 253.9Z" fill="#f7f40e" stroke="#fdfd9a" stroke-width="0.9"/><path d="M1388.1 223.4L1388.1 246.9" stroke="#dcd628" stroke-width="2.0"/><path d="M1393.1 223.4L1393.1 246.9" stroke="#dcd628" stroke-width="2.0"/><rect x="1387.3" y="212.6" width="8.3" height="3.8" fill="#dcd628"/><path d="M1402.7 201.4 L1419.5 201.4 L1419.5 250.9 L1402.7 250.9Z" fill="#f7f40e" stroke="#fdfd9a" stroke-width="0.9"/><path d="M1407.8 218.7L1407.8 243.5" stroke="#dcd628" stroke-width="2.0"/><path d="M1412.8 218.7L1412.8 243.5" stroke="#dcd628" stroke-width="2.0"/><rect x="1406.9" y="207.4" width="8.4" height="4.0" fill="#dcd628"/><path d="M1422.5 202.6 L1436.9 202.6 L1436.9 247.9 L1422.5 247.9Z" fill="#f7f40e" stroke="#fdfd9a" stroke-width="0.9"/><path d="M1426.8 218.4L1426.8 241.1" stroke="#dcd628" stroke-width="1.7"/><path d="M1431.1 218.4L1431.1 241.1" stroke="#dcd628" stroke-width="1.7"/><rect x="1426.1" y="208.0" width="7.2" height="3.6" fill="#dcd628"/><path d="M1438.9 200.2 L1452.3 200.2 L1452.3 245.4 L1438.9 245.4Z" fill="#f7f40e" stroke="#fdfd9a" stroke-width="0.9"/><path d="M1442.9 216.0L1442.9 238.6" stroke="#dcd628" stroke-width="1.6"/><path d="M1446.9 216.0L1446.9 238.6" stroke="#dcd628" stroke-width="1.6"/><rect x="1442.2" y="205.6" width="6.7" height="3.6" fill="#dcd628"/><path d="M1454.3 201.1 L1470.4 201.1 L1470.4 243.0 L1454.3 243.0Z" fill="#f7f40e" stroke="#fdfd9a" stroke-width="0.9"/><path d="M1459.1 215.8L1459.1 236.7" stroke="#dcd628" stroke-width="1.9"/><path d="M1463.9 215.8L1463.9 236.7" stroke="#dcd628" stroke-width="1.9"/><rect x="1458.3" y="206.1" width="8.1" height="3.4" fill="#dcd628"/><path d="M1472.4 197.8 L1488.6 197.8 L1488.6 240.3 L1472.4 240.3Z" fill="#f7f40e" stroke="#fdfd9a" stroke-width="0.9"/><path d="M1477.2 212.7L1477.2 233.9" stroke="#dcd628" stroke-width="1.9"/><path d="M1482.1 212.7L1482.1 233.9" stroke="#dcd628" stroke-width="1.9"/><rect x="1476.4" y="202.9" width="8.1" height="3.4" fill="#dcd628"/><path d="M1492.6 198.7 L1507.8 198.7 L1507.8 237.2 L1492.6 237.2Z" fill="#f7f40e" stroke="#fdfd9a" stroke-width="0.9"/><path d="M1497.2 212.2L1497.2 231.4" stroke="#dcd628" stroke-width="1.8"/><path d="M1501.7 212.2L1501.7 231.4" stroke="#dcd628" stroke-width="1.8"/><rect x="1496.4" y="203.3" width="7.6" height="3.1" fill="#dcd628"/><path d="M1510.8 196.1 L1527.5 196.1 L1527.5 234.4 L1510.8 234.4Z" fill="#f7f40e" stroke="#fdfd9a" stroke-width="0.9"/><path d="M1515.8 209.5L1515.8 228.6" stroke="#dcd628" stroke-width="2.0"/><path d="M1520.8 209.5L1520.8 228.6" stroke="#dcd628" stroke-width="2.0"/><rect x="1515.0" y="200.7" width="8.4" height="3.1" fill="#dcd628"/><path d="M1531.5 193.6 L1545.8 193.6 L1545.8 231.2 L1531.5 231.2Z" fill="#f7f40e" stroke="#fdfd9a" stroke-width="0.9"/><path d="M1535.8 206.7L1535.8 225.6" stroke="#dcd628" stroke-width="1.7"/><path d="M1540.1 206.7L1540.1 225.6" stroke="#dcd628" stroke-width="1.7"/><rect x="1535.1" y="198.1" width="7.1" height="3.0" fill="#dcd628"/><path d="M1547.8 193.2 L1561.6 193.2 L1561.6 228.7 L1547.8 228.7Z" fill="#f7f40e" stroke="#fdfd9a" stroke-width="0.9"/><path d="M1551.9 205.6L1551.9 223.4" stroke="#dcd628" stroke-width="1.7"/><path d="M1556.1 205.6L1556.1 223.4" stroke="#dcd628" stroke-width="1.7"/><rect x="1551.2" y="197.4" width="6.9" height="2.8" fill="#dcd628"/><path d="M1565.6 192.8 L1579.1 192.8 L1579.1 226.0 L1565.6 226.0Z" fill="#f7f40e" stroke="#fdfd9a" stroke-width="0.9"/><path d="M1569.7 204.4L1569.7 221.0" stroke="#dcd628" stroke-width="1.6"/><path d="M1573.7 204.4L1573.7 221.0" stroke="#dcd628" stroke-width="1.6"/><rect x="1569.0" y="196.8" width="6.8" height="2.7" fill="#dcd628"/><path d="M1583.1 189.1 L1597.8 189.1 L1597.8 223.3 L1583.1 223.3Z" fill="#f7f40e" stroke="#fdfd9a" stroke-width="0.9"/><path d="M1587.5 201.1L1587.5 218.2" stroke="#dcd628" stroke-width="1.8"/><path d="M1591.9 201.1L1591.9 218.2" stroke="#dcd628" stroke-width="1.8"/><rect x="1586.8" y="193.2" width="7.3" height="2.7" fill="#dcd628"/><path d="M1599.8 190.4 L1615.1 190.4 L1615.1 220.8 L1599.8 220.8Z" fill="#f7f40e" stroke="#fdfd9a" stroke-width="0.9"/><path d="M1604.4 201.0L1604.4 216.2" stroke="#dcd628" stroke-width="1.8"/><path d="M1609.0 201.0L1609.0 216.2" stroke="#dcd628" stroke-width="1.8"/><rect x="1603.6" y="194.1" width="7.7" height="2.4" fill="#dcd628"/><path d="M1618.1 185.9 L1632.3 185.9 L1632.3 218.0 L1618.1 218.0Z" fill="#f7f40e" stroke="#fdfd9a" stroke-width="0.9"/><path d="M1622.4 197.1L1622.4 213.2" stroke="#dcd628" stroke-width="1.7"/><path d="M1626.6 197.1L1626.6 213.2" stroke="#dcd628" stroke-width="1.7"/><rect x="1621.7" y="189.8" width="7.1" height="2.6" fill="#dcd628"/><path d="M1635.3 185.1 L1646.0 185.1 L1646.0 215.3 L1635.3 215.3Z" fill="#f7f40e" stroke="#fdfd9a" stroke-width="0.9"/><path d="M1638.5 195.7L1638.5 210.8" stroke="#dcd628" stroke-width="1.3"/><path d="M1641.7 195.7L1641.7 210.8" stroke="#dcd628" stroke-width="1.3"/><rect x="1637.9" y="188.7" width="5.4" height="2.4" fill="#dcd628"/><path d="M1450.5 208.5 L1465.5 208.5 L1465.5 241.2 L1450.5 241.2Z" fill="#f7f40e" stroke="#fdfd9a" stroke-width="0.9"/><path d="M1455.0 220.0L1455.0 236.3" stroke="#dcd628" stroke-width="1.8"/><path d="M1459.5 220.0L1459.5 236.3" stroke="#dcd628" stroke-width="1.8"/><rect x="1454.2" y="212.5" width="7.5" height="2.6" fill="#dcd628"/><path d="M1514.7 194.2 L1529.7 194.2 L1529.7 225.8 L1514.7 225.8Z" fill="#f7f40e" stroke="#fdfd9a" stroke-width="0.9"/><path d="M1408.2 178.6 L1423.1 178.6 L1423.1 208.4 L1408.2 208.4Z" fill="#f7f40e" stroke="#fdfd9a" stroke-width="0.9"/><path d="M1422.1 224.5 L1434.1 224.5 L1434.1 255.7 L1422.1 255.7Z" fill="#f7f40e" stroke="#fdfd9a" stroke-width="0.9"/><path d="M1425.7 235.4L1425.7 251.0" stroke="#dcd628" stroke-width="1.4"/><path d="M1429.3 235.4L1429.3 251.0" stroke="#dcd628" stroke-width="1.4"/><rect x="1425.1" y="228.3" width="6.0" height="2.5" fill="#dcd628"/><path d="M1369.9 202.7 L1382.1 202.7 L1382.1 229.0 L1369.9 229.0Z" fill="#f7f40e" stroke="#fdfd9a" stroke-width="0.9"/><path d="M1373.5 211.9L1373.5 225.1" stroke="#dcd628" stroke-width="1.5"/><path d="M1377.2 211.9L1377.2 225.1" stroke="#dcd628" stroke-width="1.5"/><rect x="1372.9" y="205.8" width="6.1" height="2.1" fill="#dcd628"/><path d="M1390.2 162.8 L1402.5 162.8 L1402.5 195.3 L1390.2 195.3Z" fill="#f7f40e" stroke="#fdfd9a" stroke-width="0.9"/><path d="M1393.9 174.2L1393.9 190.4" stroke="#dcd628" stroke-width="1.5"/><path d="M1397.6 174.2L1397.6 190.4" stroke="#dcd628" stroke-width="1.5"/><rect x="1393.3" y="166.7" width="6.1" height="2.6" fill="#dcd628"/><path d="M1390.8 156.0 L1406.4 156.0 L1406.4 185.5 L1390.8 185.5Z" fill="#f7f40e" stroke="#fdfd9a" stroke-width="0.9"/><path d="M1515.8 188.6 L1529.3 188.6 L1529.3 216.5 L1515.8 216.5Z" fill="#f7f40e" stroke="#fdfd9a" stroke-width="0.9"/><path d="M1519.8 198.4L1519.8 212.3" stroke="#dcd628" stroke-width="1.6"/><path d="M1523.9 198.4L1523.9 212.3" stroke="#dcd628" stroke-width="1.6"/><rect x="1519.2" y="192.0" width="6.8" height="2.2" fill="#dcd628"/><path d="M1457.6 225.4 L1471.6 225.4 L1471.6 256.9 L1457.6 256.9Z" fill="#f7f40e" stroke="#fdfd9a" stroke-width="0.9"/><path d="M1493.8 202.3 L1508.0 202.3 L1508.0 227.3 L1493.8 227.3Z" fill="#f7f40e" stroke="#fdfd9a" stroke-width="0.9"/><path d="M1498.1 211.1L1498.1 223.5" stroke="#dcd628" stroke-width="1.7"/><path d="M1502.3 211.1L1502.3 223.5" stroke="#dcd628" stroke-width="1.7"/><rect x="1497.4" y="205.3" width="7.1" height="2.0" fill="#dcd628"/><path d="M1497.4 184.5 L1512.1 184.5 L1512.1 211.1 L1497.4 211.1Z" fill="#f7f40e" stroke="#fdfd9a" stroke-width="0.9"/><path d="M1399.8 211.3 L1415.0 211.3 L1415.0 235.5 L1399.8 235.5Z" fill="#f7f40e" stroke="#fdfd9a" stroke-width="0.9"/><path d="M1380.6 224.0 L1393.3 224.0 L1393.3 249.3 L1380.6 249.3Z" fill="#f7f40e" stroke="#fdfd9a" stroke-width="0.9"/><path d="M1460.7 150.8 L1474.5 150.8 L1474.5 183.1 L1460.7 183.1Z" fill="#f7f40e" stroke="#fdfd9a" stroke-width="0.9"/><path d="M1464.8 162.1L1464.8 178.3" stroke="#dcd628" stroke-width="1.7"/><path d="M1469.0 162.1L1469.0 178.3" stroke="#dcd628" stroke-width="1.7"/><rect x="1464.1" y="154.7" width="6.9" height="2.6" fill="#dcd628"/><path d="M1481.9 172.8 L1495.7 172.8 L1495.7 200.8 L1481.9 200.8Z" fill="#f7f40e" stroke="#fdfd9a" stroke-width="0.9"/><path d="M1486.0 182.6L1486.0 196.6" stroke="#dcd628" stroke-width="1.7"/><path d="M1490.2 182.6L1490.2 196.6" stroke="#dcd628" stroke-width="1.7"/><rect x="1485.3" y="176.1" width="6.9" height="2.2" fill="#dcd628"/><path d="M1426.0 190.7 L1440.5 190.7 L1440.5 220.1 L1426.0 220.1Z" fill="#f7f40e" stroke="#fdfd9a" stroke-width="0.9"/><path d="M1430.4 201.0L1430.4 215.7" stroke="#dcd628" stroke-width="1.7"/><path d="M1434.7 201.0L1434.7 215.7" stroke="#dcd628" stroke-width="1.7"/><rect x="1429.6" y="194.3" width="7.2" height="2.4" fill="#dcd628"/><path d="M1442.0 251.9 L1453.0 251.9 L1453.0 285.0 L1442.0 285.0Z" fill="#f7f40e" stroke="#fdfd9a" stroke-width="0.9"/><path d="M1445.3 263.5L1445.3 280.0" stroke="#dcd628" stroke-width="1.3"/><path d="M1448.6 263.5L1448.6 280.0" stroke="#dcd628" stroke-width="1.3"/><rect x="1444.8" y="255.9" width="5.5" height="2.6" fill="#dcd628"/><path d="M1457.0 249.6 L1468.0 249.6 L1468.0 281.6 L1457.0 281.6Z" fill="#f7f40e" stroke="#fdfd9a" stroke-width="0.9"/><path d="M1460.3 260.8L1460.3 276.8" stroke="#dcd628" stroke-width="1.3"/><path d="M1463.6 260.8L1463.6 276.8" stroke="#dcd628" stroke-width="1.3"/><rect x="1459.8" y="253.4" width="5.5" height="2.6" fill="#dcd628"/><path d="M1472.0 247.3 L1483.0 247.3 L1483.0 278.1 L1472.0 278.1Z" fill="#f7f40e" stroke="#fdfd9a" stroke-width="0.9"/><path d="M1475.3 258.1L1475.3 273.5" stroke="#dcd628" stroke-width="1.3"/><path d="M1478.6 258.1L1478.6 273.5" stroke="#dcd628" stroke-width="1.3"/><rect x="1474.8" y="251.0" width="5.5" height="2.5" fill="#dcd628"/><path d="M1502.0 242.7 L1513.0 242.7 L1513.0 271.3 L1502.0 271.3Z" fill="#f7f40e" stroke="#fdfd9a" stroke-width="0.9"/><path d="M1505.3 252.7L1505.3 267.0" stroke="#dcd628" stroke-width="1.3"/><path d="M1508.6 252.7L1508.6 267.0" stroke="#dcd628" stroke-width="1.3"/><rect x="1504.8" y="246.2" width="5.5" height="2.3" fill="#dcd628"/><path d="M1568.0 229.6 L1582.0 229.6 L1582.0 257.4 L1568.0 257.4Z" fill="#f7f40e" stroke="#fdfd9a" stroke-width="0.9"/><path d="M1572.2 239.3L1572.2 253.2" stroke="#dcd628" stroke-width="1.7"/><path d="M1576.4 239.3L1576.4 253.2" stroke="#dcd628" stroke-width="1.7"/><rect x="1571.5" y="233.0" width="7.0" height="2.2" fill="#dcd628"/><path d="M1585.0 227.0 L1599.0 227.0 L1599.0 254.0 L1585.0 254.0Z" fill="#f7f40e" stroke="#fdfd9a" stroke-width="0.9"/><path d="M1589.2 236.5L1589.2 250.0" stroke="#dcd628" stroke-width="1.7"/><path d="M1593.4 236.5L1593.4 250.0" stroke="#dcd628" stroke-width="1.7"/><rect x="1588.5" y="230.3" width="7.0" height="2.2" fill="#dcd628"/><path d="M1602.0 224.4 L1616.0 224.4 L1616.0 250.6 L1602.0 250.6Z" fill="#f7f40e" stroke="#fdfd9a" stroke-width="0.9"/><path d="M1606.2 233.6L1606.2 246.7" stroke="#dcd628" stroke-width="1.7"/><path d="M1610.4 233.6L1610.4 246.7" stroke="#dcd628" stroke-width="1.7"/><rect x="1605.5" y="227.6" width="7.0" height="2.1" fill="#dcd628"/><path d="M1618.0 222.0 L1632.0 222.0 L1632.0 247.4 L1618.0 247.4Z" fill="#f7f40e" stroke="#fdfd9a" stroke-width="0.9"/><path d="M1622.2 230.9L1622.2 243.6" stroke="#dcd628" stroke-width="1.7"/><path d="M1626.4 230.9L1626.4 243.6" stroke="#dcd628" stroke-width="1.7"/><rect x="1621.5" y="225.0" width="7.0" height="2.0" fill="#dcd628"/><path d="M1636.0 143.0 L1654.0 143.0 L1641.0 248.0 L1630.0 250.0Z" fill="#f28d62" /><path d="M1640.0 101.0L1636.0 143.0" stroke="#2a2523" stroke-width="1"/><path d="M1654.0 143.0L1641.0 248.0" stroke="#2a2523" stroke-width="1"/><path d="M1300.0 226.0 L1330.0 228.0 L1330.0 252.0 L1300.0 249.0Z" fill="#d96b43" /><path d="M1395.0 234.0 L1420.0 232.0 L1420.0 249.0 L1395.0 252.0Z" fill="#f0865b" /><path d="M1017 186.9L1100 190.7" stroke="#f7f7f2" stroke-width="4"/><path d="M1140 192.6L1240 197.3" stroke="#f7f7f2" stroke-width="3"/><path d="M1025 221.8L1095 229.3" stroke="#f7f7f2" stroke-width="4"/><path d="M1150 235.2L1240 244.8" stroke="#f7f7f2" stroke-width="4"/><path d="M1300 251.2L1363 258.0" stroke="#f7f7f2" stroke-width="4"/><path d="M1550 189.3L1650 182.0" stroke="#f7f7f2" stroke-width="4"/><path d="M1363 258.0L1644 215.0" stroke="#f7f7f2" stroke-width="4.5"/><path d="M1398.0 244.0 L1452.0 250.0 L1452.0 258.0 L1398.0 252.0Z" fill="#2b2e30" /><path d="M1272.0 252.0 L1312.0 256.0 L1312.0 264.0 L1272.0 260.0Z" fill="#2b2e30" /><path d="M1274.0 258.0 L1292.0 261.0 L1292.0 306.0 L1274.0 302.0Z" fill="#33373a" /><path d="M1061.0 222.0 L1083.0 224.0 L1083.0 231.0 L1061.0 229.0Z" fill="#2b2e30" /><path d="M1076.0 232.0 L1086.0 233.0 L1088.0 258.0 L1078.0 256.0Z" fill="#33373a" /><path d="M1525.0 238.0 L1545.0 236.0 L1545.0 300.0 L1525.0 300.0Z" fill="#2f3234" /><path d="M1526.0 274.0 L1541.0 274.0 L1541.0 294.0 L1526.0 294.0Z" fill="#eeeeea" /><path d="M1520.0 294.0 L1549.0 294.0 L1549.0 300.0 L1520.0 300.0Z" fill="#d8d8d2" /><path d="M1346 190V176" stroke="#2020ff" stroke-width="1.5"/><path d="M1346 190L1340 192" stroke="#ff2020" stroke-width="1.5"/><path d="M1346 190L1360 192" stroke="#20d020" stroke-width="1.5"/><path d="M1029.0 253.0 L1363.0 311.0 L1363.0 356.0 L1032.0 280.0Z" fill="#333536" stroke="#2a2523" stroke-width="1"/><path d="M1363.0 311.0 L1512.0 277.0 L1512.0 311.0 L1363.0 356.0Z" fill="#393b3c" stroke="#2a2523" stroke-width="1"/><path d="M1512.0 262.0 L1525.0 262.0 L1525.0 305.0 L1512.0 311.0Z" fill="#2d3031" /><path d="M1545.0 262.0 L1565.0 263.0 L1565.0 294.0 L1545.0 300.0Z" fill="#2d3031" /><path d="M1565.0 263.0 L1641.0 246.0 L1641.0 273.0 L1565.0 294.0Z" fill="#393b3c" stroke="#2a2523" stroke-width="1"/><path d="M1029.4 256.9L1363 317.4" stroke="#464849" stroke-width="0.5"/><path d="M1363 317.4L1512 281.9" stroke="#4a4c4d" stroke-width="0.5"/><path d="M1565 267.4L1641 249.9" stroke="#4a4c4d" stroke-width="0.5"/><path d="M1029.9 260.7L1363 323.9" stroke="#464849" stroke-width="0.5"/><path d="M1363 323.9L1512 286.7" stroke="#4a4c4d" stroke-width="0.5"/><path d="M1565 271.9L1641 253.7" stroke="#4a4c4d" stroke-width="0.5"/><path d="M1030.3 264.6L1363 330.3" stroke="#464849" stroke-width="0.5"/><path d="M1363 330.3L1512 291.6" stroke="#4a4c4d" stroke-width="0.5"/><path d="M1565 276.3L1641 257.6" stroke="#4a4c4d" stroke-width="0.5"/><path d="M1030.7 268.4L1363 336.7" stroke="#464849" stroke-width="0.5"/><path d="M1363 336.7L1512 296.4" stroke="#4a4c4d" stroke-width="0.5"/><path d="M1565 280.7L1641 261.4" stroke="#4a4c4d" stroke-width="0.5"/><path d="M1031.1 272.3L1363 343.1" stroke="#464849" stroke-width="0.5"/><path d="M1363 343.1L1512 301.3" stroke="#4a4c4d" stroke-width="0.5"/><path d="M1565 285.1L1641 265.3" stroke="#4a4c4d" stroke-width="0.5"/><path d="M1031.6 276.1L1363 349.6" stroke="#464849" stroke-width="0.5"/><path d="M1363 349.6L1512 306.1" stroke="#4a4c4d" stroke-width="0.5"/><path d="M1565 289.6L1641 269.1" stroke="#4a4c4d" stroke-width="0.5"/><path d="M1363.0 222.0L1363.0 356.0" stroke="#2a2523" stroke-width="1"/><path d="M1370.0 240.0L1370.0 311.0" stroke="#c0623c" stroke-width="0.8"/><path d="M1404.0 319.0 L1420.0 306.0 L1447.0 301.0 L1430.0 320.0Z" fill="#5d5e5f" /><path d="M1055.0 257.0 L1083.0 261.0 L1084.0 270.0 L1068.0 268.0 L1058.0 272.0Z" fill="#5f6061" /><path d="M1068 271Q1074 265 1085 265" stroke="#bbb" stroke-width="0.8" fill="none"/><path d="M1590.0 262.0 L1620.0 257.0 L1612.0 275.0 L1588.0 280.0Z" fill="#5d5e5f" /><rect x="1177" y="273" width="4" height="4" fill="#111"/><rect x="1191" y="277" width="4" height="4" fill="#111"/><rect x="1219" y="282" width="4" height="4" fill="#111"/><rect x="1276" y="293" width="4" height="4" fill="#111"/><rect x="1520" y="299" width="4" height="4" fill="#111"/></svg>
<svg class="a" style="left:940px;top:240px" width="110" height="110" viewBox="940 240 110 110">
<circle cx="992" cy="294" r="45" fill="#3e3938"/>
<path d="M992 293V268" stroke="#1010ff" stroke-width="2"/><path d="M988.5 271L992 262L995.5 271z" fill="#1010ff"/>
<text x="990" y="261" font-family="Liberation Sans" font-size="10" fill="#1010ff">Z</text>
<path d="M992 294L975 300" stroke="#ff1010" stroke-width="2"/><path d="M978 296.5L970 301.5L979.5 302z" fill="#ff1010"/>
<text x="962" y="304" font-family="Liberation Sans" font-size="10" fill="#ff1010">X</text>
<path d="M992 294L1010 298" stroke="#10d010" stroke-width="2"/><path d="M1008 294.5L1017 299L1007 301z" fill="#10d010"/>
<text x="1021" y="303" font-family="Liberation Sans" font-size="10" fill="#10d010">Y</text>
<circle cx="992" cy="294" r="3.5" fill="#aaa"/>
</svg>
<svg class="a" style="left:1675px;top:75px" width="90" height="85" viewBox="1675 75 90 85">
<path d="M1681 85.8L1719 80.3L1759.7 85L1724 92z" fill="#fff" stroke="#444" stroke-width="1"/>
<path d="M1681 85.8L1724 92L1724 156.4L1685.8 134.3z" fill="#fff" stroke="#444" stroke-width="1"/>
<path d="M1724 92L1759.7 85L1754.7 133L1724 156.4z" fill="#fff" stroke="#444" stroke-width="1"/>
<path d="M1724 92V156" stroke="#333" stroke-width="1.4"/>
<text transform="translate(1689.5 120) skewY(23) scale(0.5 1)" font-family="Liberation Sans" font-size="14" fill="#808080">Справа</text>
<text transform="translate(1733.5 131) skewY(-34) scale(0.5 1)" font-family="Liberation Sans" font-size="14" fill="#808080">Сзади</text>
</svg>
<div class="a" style="left:942px;top:424px;width:846px;height:387px;background:#555555;border-radius:5px 5px 0 0"></div>
<div class="a" style="left:1365px;top:430px;width:42px;height:2px;background:#3a93b2"></div>
<svg class="a" style="left:956px;top:437px" width="18" height="16" viewBox="0 0 18 16"><rect x="0" y="0.5" width="13" height="1.8" fill="#e2e2e2"/><rect x="0" y="4.6" width="13" height="1.8" fill="#e2e2e2"/><rect x="0" y="8.7" width="9" height="1.8" fill="#e2e2e2"/><path d="M11 8.5l5 3.5l-5 3.5z" fill="#cfcfcf"/></svg>
<div class="t" style="left:986px;top:438px;font-size:14.4px;color:#e6e6e6">Коллизии (количество: 0)</div>
<svg class="a" style="left:1616px;top:434px" width="22" height="20" fill="none" stroke="#e2e2e2" stroke-width="1.7"><path d="M15.5 5.3V3.4a2 2 0 0 0-2-2H3.7a2 2 0 0 0-2 2v7.7a2 2 0 0 0 2 2H6.6"/><path d="M6.6 9.2v6.8a2 2 0 0 0 2 2h8.8a2 2 0 0 0 2-2V7.3a2 2 0 0 0-2-2h-1.9"/><path d="M6.6 9.2h4.6v3.9H6.6"/></svg>
<svg class="a" style="left:1653px;top:434px" width="18" height="22" fill="none" stroke="#e2e2e2" stroke-width="2"><path d="M2 3.4h13.8M2 19h13.8"/><path d="M8.9 6.5v10" stroke-width="1.6"/><path d="M6 9l2.9-3l2.9 3z M6 14l2.9 3l2.9-3z" fill="#e2e2e2" stroke-width="1"/></svg>
<svg class="a" style="left:1687px;top:434px" width="18" height="22" fill="none" stroke="#e2e2e2"><path d="M1.9 10.9h14.2" stroke-width="3.4"/><path d="M9 1.5v5M9 20.5v-5" stroke-width="1.6"/><path d="M6.3 4.7l2.7 3l2.7-3z M6.3 17.3l2.7-3l2.7 3z" fill="#e2e2e2" stroke-width="1"/></svg>
<svg class="a" style="left:1720px;top:435px" width="20" height="20"><path d="M16.31 8.10 L18.84 8.35 L18.84 11.65 L16.31 11.90 L15.87 12.98 L17.48 14.95 L15.15 17.28 L13.18 15.67 L12.10 16.11 L11.85 18.64 L8.55 18.64 L8.30 16.11 L7.22 15.67 L5.25 17.28 L2.92 14.95 L4.53 12.98 L4.09 11.90 L1.56 11.65 L1.56 8.35 L4.09 8.10 L4.53 7.02 L2.92 5.05 L5.25 2.72 L7.22 4.33 L8.30 3.89 L8.55 1.36 L11.85 1.36 L12.10 3.89 L13.18 4.33 L15.15 2.72 L17.48 5.05 L15.87 7.02Z M12.799999999999999 10 A2.6 2.6 0 1 0 7.6 10 A2.6 2.6 0 1 0 12.799999999999999 10Z" fill="#e2e2e2" fill-rule="evenodd"/></svg>
<svg class="a" style="left:1757px;top:441px" width="14" height="10" fill="none" stroke="#e2e2e2" stroke-width="1.8"><path d="M2 2l5 5l5-5"/></svg>
<div class="a" style="left:1002px;top:461px;width:786px;height:32px;background:#676767;border-radius:0 0 0 2px"></div>
<div class="a" style="left:942px;top:461px;width:60px;height:31px;background:#fff;border-bottom:1px solid #ddd"></div>
<div class="a" style="left:960px;top:469px;width:16px;height:16px;border:2px solid #3a93b2;border-radius:2.5px"></div>
<div class="a" style="left:1092px;top:461px;width:1px;height:32px;background:#5a5a5a"></div>
<div class="a" style="left:1377px;top:461px;width:1px;height:32px;background:#5a5a5a"></div>
<div class="a" style="left:1570px;top:461px;width:1px;height:32px;background:#5a5a5a"></div>
<div class="t" style="left:1019px;top:472px;font-size:11.45px;font-weight:bold;color:#e6e6e6">Статус</div>
<div class="t" style="left:1108px;top:472px;font-size:11.45px;font-weight:bold;color:#e6e6e6">Элемент (Модель А)</div>
<div class="t" style="left:1394px;top:472px;font-size:11.45px;font-weight:bold;color:#e6e6e6">Элемент (Модель В)</div>
<div class="t" style="left:1586px;top:472px;font-size:11.45px;font-weight:bold;color:#e6e6e6">GUID элемента (Модель А)</div>
<div class="a" style="left:942px;top:493px;width:846px;height:310px;background:#fff"></div>
<div class="t" style="left:1611px;top:502px;font-size:14.1px;color:#9a9a9a">Отсутствуют данные</div>
<div class="a" style="left:942px;top:803px;width:846px;height:8px;background:#666;border-radius:0 0 4px 4px"></div>
<div class="a" style="left:942px;top:803px;width:438px;height:8px;background:#3a93b2;border-radius:0 0 0 4px"></div>
<div class="rs" style="top:36px;height:773px"></div>
<div class="a" style="left:1796px;top:127px;width:36px;height:2px;background:#3f3a39"></div>
<div class="a" style="left:1796px;top:396px;width:36px;height:2px;background:#3f3a39"></div>
<div class="a" style="left:1796px;top:446px;width:36px;height:2px;background:#3f3a39"></div>
<div class="a" style="left:1796px;top:627px;width:36px;height:2px;background:#3f3a39"></div>
<div class="a" style="left:1796px;top:720px;width:36px;height:2px;background:#3f3a39"></div>
<svg class="a" style="left:1796px;top:36px;overflow:visible" width="36" height="44" viewBox="0 0 36 44"><path d="M12 30H10.5a5.2 5.2 0 0 1 -1.2 -10.3a8.3 8.3 0 0 1 16.4 0a5.2 5.2 0 0 1 -1.2 10.3H23" fill="none" stroke="#e2e2e2" stroke-width="1.5"/><path d="M17.5 18v17M17.5 27.5l-4-3.2M17.5 25.3l3.6-3" fill="none" stroke="#e2e2e2" stroke-width="1.5"/></svg>
<svg class="a" style="left:1796px;top:80px;overflow:visible" width="36" height="44" viewBox="0 0 36 44"><path d="M13.5 28.6H5V11.4H28.8V17.5" fill="none" stroke="#e2e2e2" stroke-width="1.5"/><path d="M13.8 28.6V31H15.5" fill="none" stroke="#e2e2e2" stroke-width="1.5"/><path d="M15.2 25V20.2H20M26 20.2H31V25M31 31.5V36.5H26M20 36.5H15.2V31.5" fill="none" stroke="#e2e2e2" stroke-width="1.5"/><path d="M23 24.3l4 2.3v4.6l-4 2.3l-4-2.3v-4.6z" fill="#e2e2e2"/></svg>
<svg class="a" style="left:1796px;top:132px;overflow:visible" width="36" height="44" viewBox="0 0 36 44"><rect x="5.5" y="16.5" width="25" height="9" fill="none" stroke="#e2e2e2" stroke-width="1.5"/><path d="M9 25v-3M12 25v-2M15 25v-3M18 25v-2M21 25v-3M24 25v-2M27 25v-3" fill="none" stroke="#e2e2e2" stroke-width="1.5"/><rect x="5" y="26.8" width="26" height="1.8" fill="#e2e2e2"/></svg>
<svg class="a" style="left:1796px;top:175px;overflow:visible" width="36" height="44" viewBox="0 0 36 44"><path d="M22.5 8.2L13 15.7V35.6L22.5 28.2z" fill="#e2e2e2"/><path d="M4.7 24.6L12.5 18.6H31.4L23.5 24.6z" fill="none" stroke="#e2e2e2" stroke-width="1.3"/></svg>
<svg class="a" style="left:1796px;top:175px;overflow:visible" width="36" height="90" viewBox="0 0 36 90"><path d="M6.3 59.6H22.5V76.9H6.3z M13 55.4H29.8V73.2H13z M6.3 59.6L13 55.4M22.5 59.6L29.8 55.4M22.5 76.9L29.8 73.2M6.3 76.9L13 73.2" fill="none" stroke="#e2e2e2" stroke-width="1.2"/><path d="M15.7 58.5L21.4 55.6V73.5L15.7 76.4z" fill="#e2e2e2"/></svg>
<svg class="a" style="left:1796px;top:262px;overflow:visible" width="36" height="44" viewBox="0 0 36 44"><path d="M8 12h21v21H4V16z" fill="none" stroke="#e2e2e2" stroke-width="1.5"/><path d="M4 16h4v-4" fill="none" stroke="#e2e2e2" stroke-width="1.5"/><path d="M4 24h25M16 12v21" fill="none" stroke="#e2e2e2" stroke-width="1.3" stroke-dasharray="2 1.5"/><path d="M29 14h2v21H7v-2" fill="none" stroke="#e2e2e2" stroke-width="2"/><rect x="21" y="28" width="6" height="3" fill="#e2e2e2"/></svg>
<svg class="a" style="left:1796px;top:309px;overflow:visible" width="36" height="44" viewBox="0 0 36 44"><circle cx="18" cy="21" r="8.5" fill="none" stroke="#e2e2e2" stroke-width="2"/><circle cx="18" cy="21" r="4.5" fill="#e2e2e2"/><path d="M18 10.5v-2.5M18 31.5v2.5M7.5 21H5M28.5 21H31" fill="none" stroke="#e2e2e2" stroke-width="2"/></svg>
<svg class="a" style="left:1796px;top:351px;overflow:visible" width="36" height="44" viewBox="0 0 36 44"><circle cx="18" cy="22" r="13" fill="none" stroke="#e2e2e2" stroke-width="1.3"/><path d="M13.5 30V15c3-1 5 0 7 1s4 1 5.5 0v8c-1.5 1-3.5 1-5.5 0s-4-2-7-1" fill="none" stroke="#e2e2e2" stroke-width="1.3"/></svg>
<svg class="a" style="left:1796px;top:400px" width="36" height="44" viewBox="0 0 36 44"><path d="M4 29L33 13M4 38L33 22M5 24L23 34M14 16L32 26" fill="none" stroke="#e2e2e2" stroke-width="1.2"/><text x="4" y="23" font-family="Liberation Sans" font-size="6.5" font-weight="bold" fill="#e2e2e2">1</text><text x="14" y="15" font-family="Liberation Sans" font-size="6.5" font-weight="bold" fill="#e2e2e2">2</text></svg>
<svg class="a" style="left:1796px;top:446px;overflow:visible" width="36" height="44" viewBox="0 0 36 44"><rect x="6.8" y="13.8" width="23" height="23" fill="none" stroke="#e2e2e2" stroke-width="1.6" stroke-dasharray="2.6 2"/><path d="M18 21l6 3.3v6.5L18 34l-6-3.2v-6.5z M12 24.3l6 3.3l6-3.3M18 27.6v6.4" fill="none" stroke="#e2e2e2" stroke-width="1.2"/></svg>
<svg class="a" style="left:1796px;top:490px;overflow:visible" width="36" height="44" viewBox="0 0 36 44"><rect x="6.8" y="13.8" width="23" height="23" fill="none" stroke="#e2e2e2" stroke-width="1.6" stroke-dasharray="2.6 2"/><path d="M10.5 25.3c2-4 5-6 7.5-6s5.5 2 7.5 6c-2 4-5 6-7.5 6s-5.5-2-7.5-6z" fill="#e2e2e2"/><circle cx="18" cy="25.3" r="2.6" fill="#555"/><circle cx="18" cy="25.3" r="1.3" fill="#e2e2e2"/></svg>
<svg class="a" style="left:1796px;top:534px;overflow:visible" width="36" height="44" viewBox="0 0 36 44"><rect x="6.8" y="13.8" width="23" height="23" fill="none" stroke="#e2e2e2" stroke-width="1.6" stroke-dasharray="2.6 2"/><path d="M10.5 25.3c2-4 5-6 7.5-6s5.5 2 7.5 6c-2 4-5 6-7.5 6s-5.5-2-7.5-6z" fill="#e2e2e2"/><circle cx="18" cy="25.3" r="2.6" fill="#555"/><path d="M12 18.5l13 13" stroke="#555" stroke-width="2.6"/><path d="M12 18.5l13 13" stroke="#e2e2e2" stroke-width="1.3"/></svg>
<svg class="a" style="left:1796px;top:578px;overflow:visible" width="36" height="44" viewBox="0 0 36 44"><rect x="6.8" y="13.8" width="23" height="23" fill="none" stroke="#e2e2e2" stroke-width="1.6" stroke-dasharray="2.6 2"/><rect x="16" y="23" width="16" height="16" fill="#e0e0e0"/><path d="M19.5 26.5l9 9M28.5 26.5l-9 9" stroke="#444" stroke-width="1.3"/></svg>
<div class="a" style="left:1798px;top:636px;width:32px;height:32px;background:#8c8c8c"></div>
<svg class="a" style="left:1798px;top:636px" width="32" height="32"><path d="M6 8.5l4-2.5l16 1.5l-1 14.5l-9 9l-8-6z" fill="#e2e2e2"/><path d="M10 8.2l15.5-0.7l-9.5 4.2z" fill="#8c8c8c"/><path d="M16 11.7l9.5-4.2l-1 14l-8.5 9z" fill="#9a9a9a"/></svg>
<div class="a" style="left:1798px;top:680px;width:32px;height:32px;background:#8c8c8c"></div>
<svg class="a" style="left:1798px;top:680px" width="32" height="32" fill="none" stroke="#e2e2e2" stroke-width="2"><ellipse cx="16" cy="16" rx="11.5" ry="6"/><ellipse cx="16" cy="16" rx="6" ry="11.5"/><path d="M16 16v-3M16 16l-3 3M16 16l3 3" stroke-width="0.8"/></svg>
<svg class="a" style="left:1797px;top:802px" width="6" height="6"><path d="M0 0v5h5z" fill="#eee"/></svg>
<svg class="a" style="left:0;top:0" width="1835" height="813" viewBox="0 0 1835 813">
<defs><filter id="sh" x="-20%" y="-20%" width="140%" height="140%"><feDropShadow dx="3" dy="3" stdDeviation="2" flood-color="#000" flood-opacity="0.45"/></filter></defs>
<g filter="url(#sh)" fill="#c20a0a" stroke="#c20a0a" stroke-linejoin="round">
<path d="M872 315L866 188M872 315L1027 220M872 315L716 537" fill="none" stroke-width="2.8"/>
<path d="M865 176L857.5 191L873 190z" stroke-width="1"/>
<path d="M1039 214L1022 213.5L1029.5 226z" stroke-width="1"/>
<path d="M707 549L710 532.5L721.5 541z" stroke-width="1"/>
</g></svg>
</body></html>
